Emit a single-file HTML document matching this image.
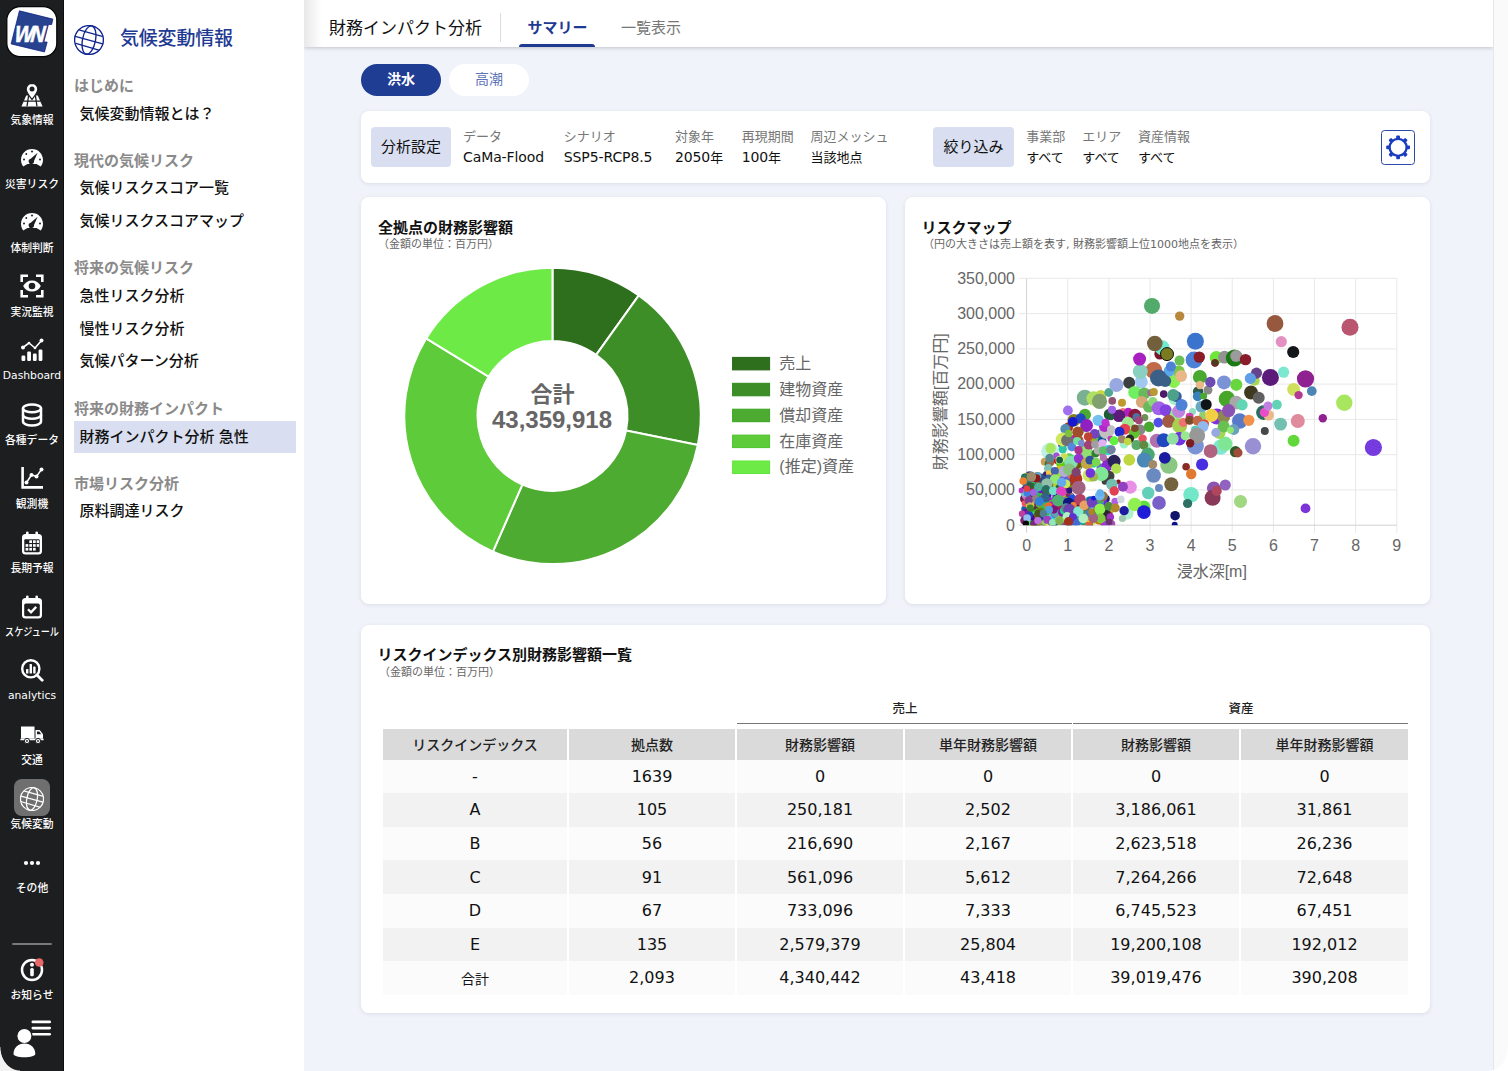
<!DOCTYPE html>
<html lang="ja">
<head>
<meta charset="utf-8">
<title>財務インパクト分析</title>
<style>
*{box-sizing:border-box;margin:0;padding:0}
html,body{width:1508px;height:1071px;overflow:hidden;background:#f0f3f9}
body{font-family:"Liberation Sans","Noto Sans CJK JP",sans-serif;color:#111;position:relative}
.abs{position:absolute}
#rail{position:absolute;left:0;top:0;width:64px;height:1071px;background:#1d1e20;border-right:1.500px solid #0d0d0e;z-index:3}
.ri{position:absolute;left:20px;width:24px;height:24px}
.ri svg{display:block;width:24px;height:24px}
.rl{position:absolute;left:-18px;width:100px;text-align:center;color:#fff;line-height:14px;height:14px;white-space:nowrap;font-weight:500}
#side{position:absolute;left:64px;top:0;width:240px;height:1071px;background:#fff;z-index:2}
.sh{position:absolute;left:10px;font-size:15px;line-height:20px;color:#8a8a8a;font-weight:700;white-space:nowrap}
.si{position:absolute;left:10px;width:222px;height:32px;padding-left:5.500px;font-size:15px;line-height:31px;color:#111;font-weight:500;white-space:nowrap}
.si.sel{background:#d9dff0}
#top{position:absolute;left:304px;top:0;width:1189px;height:47.400px;background:#fff;box-shadow:0 1px 4px rgba(0,0,0,.2);z-index:1}
#scroll{position:absolute;left:1493px;top:0;width:15px;height:1071px;background:#fafafa;border-left:1px solid #e6e6e6;z-index:2}
.pill{width:80px;height:32px;border-radius:16px;font-size:14px;line-height:31px;text-align:center}
.card{position:absolute;background:#fff;border-radius:8px;box-shadow:0 1px 4px rgba(30,40,80,.10)}
.ct{position:absolute;font-size:15px;line-height:20px;font-weight:700;color:#111;white-space:nowrap}
.cs{position:absolute;font-size:11px;line-height:14px;color:#666;white-space:nowrap;font-weight:400;font-family:"DejaVu Sans","Noto Sans CJK JP",sans-serif}
.chip{position:absolute;height:40px;border-radius:4px;background:#d9dff0;font-size:15px;line-height:39px;text-align:center;font-weight:400;color:#111}
.k{position:absolute;top:18.500px;font-size:13px;line-height:16px;color:#777;white-space:nowrap}
.v{position:absolute;top:37.500px;font-size:14px;line-height:18px;color:#111;white-space:nowrap;font-family:"DejaVu Sans","Noto Sans CJK JP",sans-serif;letter-spacing:-.1px}
.v .j{font-size:13px;letter-spacing:0}
.gh{position:absolute;top:75.500px;font-size:12.500px;line-height:16px;text-align:center;color:#222;font-weight:500}
.tb{position:absolute;left:22px;top:103.800px;border-collapse:separate;border-spacing:0;table-layout:fixed;width:1025px}
.tb th,.tb td{text-align:center;border-right:2px solid #fff;white-space:nowrap;padding:0}
.tb th{height:30.800px;background:#dadada;font-size:14px;font-weight:500;color:#222;border-bottom:0}
.tb td{height:33.600px;font-size:16px;color:#111;font-family:"DejaVu Sans","Noto Sans CJK JP",sans-serif}
.tb td .j{font-size:14px}
.tb th:last-child,.tb td:last-child{border-right:0}
.tb tr.a td{background:#fbfbfc}
.tb tr.b td{background:#f2f2f2}
.cbl{position:absolute;left:0;bottom:0;width:20px;height:24px;z-index:9;background:radial-gradient(ellipse 20px 24px at 100% 0,rgba(255,255,255,0) 96%,#f2f2f2 100%)}
.cbr{position:absolute;right:0;bottom:0;width:18px;height:24px;z-index:9;background:radial-gradient(ellipse 18px 24px at 0 0,rgba(255,255,255,0) 96%,#fff 100%)}

</style>
</head>
<body>
<div id="rail">
<div id="corner"></div>
<svg class="abs" style="left:6px;top:6px" width="52" height="52" viewBox="-1 -1 52 52"><rect x="-.2" y="-.3" width="50" height="50" rx="13.500" fill="#fff" stroke="#060607" stroke-width="1.300"/><path d="M12.400 3.800L45.900 12.100l-1.200 5.400h-3.300L36.900 34.900l3.300.2-2.700 9.900L4.100 36.900z" fill="#27438f" stroke="#0a1585" stroke-width=".7" stroke-linejoin="miter"/><text transform="translate(5.800 34.800) skewX(-15) scale(.86 1)" font-family="Liberation Sans, sans-serif" font-weight="700" font-size="23.400" fill="#fff" stroke="#fff" stroke-width=".5" letter-spacing="-3.200">WN</text></svg>
<div class="abs" style="left:14px;top:779px;width:36px;height:37px;border-radius:8px;background:#6f6f6f"></div>
<div class="ri" style="top:82.5px"><svg viewBox="0 0 24 24"><path d="M6.2 12.6h11.6L22.6 23.4H1.4z" fill="#fff"/><g stroke="#1d1e20" stroke-width="1.3" fill="none"><path d="M3.2 18.2h17.6M8.6 12.6L7 23.4M15.4 12.6L17 23.4"/></g><path d="M12 0.3c-3.2 0-5.8 2.5-5.8 5.7 0 3.9 4.4 8.300 5.8 10.5 1.4-2.2 5.8-6.600 5.8-10.5 0-3.200-2.600-5.700-5.800-5.700z" fill="#fff" stroke="#1d1e20" stroke-width="1.2"/><circle cx="12" cy="6" r="2.5" fill="#1d1e20"/></svg></div>
<div class="rl" style="top:112.5px;font-size:10.8px">気象情報</div>
<div class="ri" style="top:146.1px"><svg viewBox="0 0 24 24"><path d="M3.2 20.4C1.9 18.600 1 16.300 1 14 1 7.900 5.900 3 12 3s11 4.900 11 11c0 2.300-.9 4.600-2.200 6.400l-4.300-2.400H7.500z" fill="#fff"/><path d="M17.600 6.800l-3.600 8.300a2.700 2.700 0 1 1-3.300-2.300z" fill="#1d1e20"/><circle cx="12" cy="5.600" r="1" fill="#1d1e20"/><circle cx="4" cy="13.600" r="1" fill="#1d1e20"/><circle cx="20" cy="13.600" r="1" fill="#1d1e20"/><circle cx="6.300" cy="8" r=".9" fill="#1d1e20"/></svg></div>
<div class="rl" style="top:177.0px;font-size:10.8px">災害リスク</div>
<div class="ri" style="top:210.1px"><svg viewBox="0 0 24 24"><path d="M3.2 20.4C1.9 18.600 1 16.300 1 14 1 7.900 5.900 3 12 3s11 4.900 11 11c0 2.300-.9 4.600-2.200 6.400l-4.300-2.400H7.500z" fill="#fff"/><path d="M17.600 6.800l-3.600 8.300a2.700 2.700 0 1 1-3.300-2.300z" fill="#1d1e20"/><circle cx="12" cy="5.600" r="1" fill="#1d1e20"/><circle cx="4" cy="13.600" r="1" fill="#1d1e20"/><circle cx="20" cy="13.600" r="1" fill="#1d1e20"/><circle cx="6.300" cy="8" r=".9" fill="#1d1e20"/></svg></div>
<div class="rl" style="top:241.0px;font-size:10.8px">体制判断</div>
<div class="ri" style="top:274.0px"><svg viewBox="0 0 24 24"><g fill="none" stroke="#fff" stroke-width="2.600"><path d="M1.700 8V1.700H8M16 1.700h6.300V8M22.300 16v6.300H16M8 22.300H1.700V16"/></g><path d="M3.200 12C5 8.300 8.200 6.400 12 6.400s7 1.900 8.800 5.600C19 15.700 15.800 17.600 12 17.600S5 15.700 3.200 12z" fill="#fff"/><circle cx="12" cy="12" r="3.300" fill="#1d1e20"/><circle cx="12" cy="12" r="1.300" fill="#fff" opacity=".0"/></svg></div>
<div class="rl" style="top:305.0px;font-size:10.8px">実況監視</div>
<div class="ri" style="top:338.0px"><svg viewBox="0 0 24 24"><g fill="#fff"><rect x="1.500" y="17.500" width="3.800" height="5.500" rx="1.200"/><rect x="7.200" y="13.500" width="3.800" height="9.500" rx="1.200"/><rect x="12.900" y="15.500" width="3.800" height="7.500" rx="1.200"/><rect x="18.600" y="11.500" width="3.800" height="11.500" rx="1.200"/></g><path d="M3 9.500L9 5l6 5 6.500-7.500" fill="none" stroke="#fff" stroke-width="1.600" stroke-linejoin="round"/><circle cx="3" cy="9.500" r="2" fill="#fff"/><circle cx="21.500" cy="2.600" r="2" fill="#fff"/><circle cx="9" cy="5" r="1.300" fill="#fff"/><circle cx="15" cy="10" r="1.300" fill="#fff"/></svg></div>
<div class="rl" style="top:369.0px;font-size:10.75px;font-family:DejaVu Sans,sans-serif;font-weight:400">Dashboard</div>
<div class="ri" style="top:402.8px"><svg viewBox="0 0 24 24"><g fill="none" stroke="#fff" stroke-width="2.500"><ellipse cx="12" cy="5.400" rx="9" ry="3.800"/><path d="M3 5.400v13.200c0 2.100 4 3.800 9 3.800s9-1.700 9-3.800V5.400"/><path d="M3 12c0 2.100 4 3.800 9 3.800s9-1.700 9-3.800"/></g></svg></div>
<div class="rl" style="top:433.0px;font-size:10.8px">各種データ</div>
<div class="ri" style="top:466.0px"><svg viewBox="0 0 24 24"><path d="M2.600 1v20.400H23" fill="none" stroke="#fff" stroke-width="2.600" stroke-linejoin="miter"/><path d="M6.500 16.500l5-7.500 5 1.500 5-7" fill="none" stroke="#fff" stroke-width="1.500"/><circle cx="6.500" cy="16.500" r="2" fill="#fff"/><circle cx="11.500" cy="9" r="2" fill="#fff"/><circle cx="16.500" cy="10.500" r="2" fill="#fff"/><circle cx="21.500" cy="3.500" r="2" fill="#fff"/></svg></div>
<div class="rl" style="top:497.0px;font-size:10.8px">観測機</div>
<div class="ri" style="top:530.5px"><svg viewBox="0 0 24 24"><rect x="6" y="0.500" width="2.600" height="5" rx="1.300" fill="#fff"/><rect x="15.400" y="0.500" width="2.600" height="5" rx="1.300" fill="#fff"/><rect x="2" y="3" width="20" height="20.500" rx="3.500" fill="#fff"/><rect x="4.300" y="8.300" width="15.400" height="12.900" rx="1" fill="#1d1e20"/><g fill="#fff"><rect x="9.300" y="9.300" width="2.700" height="2.700"/><rect x="13" y="9.300" width="2.700" height="2.700"/><rect x="16.700" y="9.300" width="2.400" height="2.700"/><rect x="5.600" y="13.100" width="2.700" height="2.700"/><rect x="9.300" y="13.100" width="2.700" height="2.700"/><rect x="13" y="13.100" width="2.700" height="2.700"/><rect x="16.700" y="13.100" width="2.400" height="2.700"/><rect x="5.600" y="16.900" width="2.700" height="2.700"/><rect x="9.300" y="16.900" width="2.700" height="2.700"/><rect x="13" y="16.900" width="2.700" height="2.700"/></g></svg></div>
<div class="rl" style="top:561.0px;font-size:10.8px">長期予報</div>
<div class="ri" style="top:594.6px"><svg viewBox="0 0 24 24"><rect x="6" y="0.500" width="2.600" height="5" rx="1.300" fill="#fff"/><rect x="15.400" y="0.500" width="2.600" height="5" rx="1.300" fill="#fff"/><rect x="2" y="3" width="20" height="20.500" rx="3.500" fill="#fff"/><rect x="4.200" y="8.600" width="15.600" height="12.700" rx="1.600" fill="#1d1e20"/><path d="M8 14.300l3 3 5.200-5.400" fill="none" stroke="#fff" stroke-width="2.300"/></svg></div>
<div class="rl" style="top:625.0px;font-size:10.8px;transform:scaleX(.84)">スケジュール</div>
<div class="ri" style="top:658.0px"><svg viewBox="0 0 24 24"><circle cx="10.800" cy="10.800" r="8.600" fill="none" stroke="#fff" stroke-width="2.400"/><path d="M17.200 17.200l5 5" stroke="#fff" stroke-width="2.800" stroke-linecap="round"/><g fill="#fff"><rect x="6" y="11" width="2.400" height="4.500" rx=".6"/><rect x="9.600" y="6" width="2.400" height="9.500" rx=".6"/><rect x="13.200" y="8.500" width="2.400" height="7" rx=".6"/></g></svg></div>
<div class="rl" style="top:689.0px;font-size:10.75px;font-family:DejaVu Sans,sans-serif;font-weight:400">analytics</div>
<div class="ri" style="top:722.0px"><svg viewBox="0 0 24 24"><path d="M1 4.500h13.500v12H1z" fill="#fff"/><path d="M15.500 8h4.200l3.300 4.300v4.200h-7.500z" fill="#fff"/><path d="M17 9.600h2.300l1.900 2.600H17z" fill="#1d1e20"/><rect x="0.300" y="16.500" width="23.400" height="1.800" rx=".9" fill="#fff"/><circle cx="7" cy="19" r="2.600" fill="#fff" stroke="#1d1e20" stroke-width="1"/><circle cx="7" cy="19" r=".9" fill="#1d1e20"/><circle cx="18" cy="19" r="2.600" fill="#fff" stroke="#1d1e20" stroke-width="1"/><circle cx="18" cy="19" r=".9" fill="#1d1e20"/></svg></div>
<div class="rl" style="top:753.0px;font-size:10.8px">交通</div>
<div class="ri" style="top:786.5px"><svg viewBox="0 0 30 30"><g fill="none" stroke="#fff" stroke-width="1.55" stroke-linecap="round"><circle cx="15" cy="15" r="14.400"/><ellipse cx="15" cy="15" rx="6.500" ry="14.300" transform="rotate(11 15 15)"/><path d="M5.800 5.100L28.200 11.400M1.200 11.400L28.700 18.900M1.900 18.400L24.700 25.200"/></g></svg></div>
<div class="rl" style="top:816.5px;font-size:10.8px">気候変動</div>
<div class="ri" style="top:851.0px"><svg viewBox="0 0 24 24"><circle cx="6" cy="12" r="2.100" fill="#fff"/><circle cx="12" cy="12" r="2.100" fill="#fff"/><circle cx="18" cy="12" r="2.100" fill="#fff"/></svg></div>
<div class="rl" style="top:880.5px;font-size:10.8px">その他</div>
<div class="ri" style="top:957.5px"><svg viewBox="0 0 24 24"><circle cx="12" cy="12" r="10" fill="none" stroke="#fff" stroke-width="2.500"/><rect x="10.200" y="10" width="3.600" height="8.300" rx="1.500" fill="#fff"/><circle cx="12" cy="6.800" r="2" fill="#fff"/><circle cx="19.200" cy="4.500" r="4.300" fill="#e9686a"/></svg></div>
<div class="rl" style="top:987.5px;font-size:10.8px">お知らせ</div>
<div class="abs" style="left:12px;top:942.500px;width:40px;height:2.500px;background:#7a7a7a;border-radius:1px"></div>
<svg class="abs" style="left:8px;top:1016px" width="48" height="46" viewBox="0 0 48 46"><g fill="#fff"><rect x="23.500" y="4.600" width="19.500" height="2.600" rx="1.300"/><rect x="23.500" y="10.800" width="19.500" height="2.600" rx="1.300"/><rect x="23.500" y="16.900" width="19.500" height="2.600" rx="1.300"/><circle cx="16.400" cy="20" r="7.600" stroke="#1d1e20" stroke-width="1.200"/><path d="M5.500 38c0-6 4.500-10.500 10.900-10.500S27.300 32 27.300 38c0 1.800-4.500 3.200-10.900 3.200S5.500 39.800 5.500 38z"/></g></svg>
</div>
<div id="side">
<div class="abs" style="left:10px;top:24.500px;width:30px;height:30px"><svg width="30" height="30" viewBox="0 0 30 30"><g fill="none" stroke="#0f2590" stroke-width="1.35" stroke-linecap="round"><circle cx="15" cy="15" r="14.400"/><ellipse cx="15" cy="15" rx="6.500" ry="14.300" transform="rotate(11 15 15)"/><path d="M5.800 5.100L28.200 11.400M1.200 11.400L28.700 18.900M1.900 18.400L24.700 25.200"/></g></svg></div>
<div class="abs" style="left:56px;top:24px;font-size:19px;line-height:30px;color:#1f3a93;font-weight:500;white-space:nowrap;letter-spacing:-.2px">気候変動情報</div>
<div class="sh" style="top:76.0px">はじめに</div>
<div class="sh" style="top:151.0px">現代の気候リスク</div>
<div class="sh" style="top:258.2px">将来の気候リスク</div>
<div class="sh" style="top:399.0px">将来の財務インパクト</div>
<div class="sh" style="top:473.5px">市場リスク分析</div>
<div class="si" style="top:97.7px">気候変動情報とは？</div>
<div class="si" style="top:172.4px">気候リスクスコア一覧</div>
<div class="si" style="top:204.5px">気候リスクスコアマップ</div>
<div class="si" style="top:280.0px">急性リスク分析</div>
<div class="si" style="top:312.6px">慢性リスク分析</div>
<div class="si" style="top:345.0px">気候パターン分析</div>
<div class="si sel" style="top:420.8px">財務インパクト分析 急性</div>
<div class="si" style="top:495.0px">原料調達リスク</div>
</div>
<div id="top">
<div class="abs" style="left:0;top:0;width:18px;height:47px;background:linear-gradient(90deg,rgba(0,0,0,.09),rgba(0,0,0,0))"></div><div class="abs" style="left:25px;top:14.800px;font-size:17px;line-height:28px;font-weight:400;color:#111;white-space:nowrap">財務インパクト分析</div>
<div class="abs" style="left:196px;top:13px;width:1px;height:29px;background:#dcdcdc"></div>
<div class="abs" style="left:223.500px;top:14px;font-size:15px;line-height:28px;font-weight:700;color:#1f3a93;white-space:nowrap">サマリー</div>
<div class="abs" style="left:215px;top:43.600px;width:76px;height:3.400px;background:#1f3a93;border-radius:3px 3px 0 0"></div>
<div class="abs" style="left:317px;top:14px;font-size:15px;line-height:28px;font-weight:400;color:#777;white-space:nowrap">一覧表示</div>
</div>
<div id="scroll"></div>
<div class="abs pill" style="left:361px;top:63.500px;background:#1f3d93;color:#fff;font-weight:700">洪水</div>
<div class="abs pill" style="left:449px;top:63.500px;background:#fff;color:#5d76b9;font-weight:400">高潮</div>
<div class="card" style="left:361px;top:110.500px;width:1069px;height:72px">
<div class="chip" style="left:9.700px;top:16px;width:80.500px">分析設定</div>
<div class="k" style="left:102.0px">データ</div><div class="v" style="left:102.0px">CaMa-Flood</div>
<div class="k" style="left:202.8px">シナリオ</div><div class="v" style="left:202.8px">SSP5-RCP8.5</div>
<div class="k" style="left:313.9px">対象年</div><div class="v" style="left:313.9px">2050<span class="j">年</span></div>
<div class="k" style="left:380.7px">再現期間</div><div class="v" style="left:380.7px">100<span class="j">年</span></div>
<div class="k" style="left:449.5px">周辺メッシュ</div><div class="v" style="left:449.5px"><span class="j">当該地点</span></div>
<div class="chip" style="left:572.300px;top:16px;width:80.500px">絞り込み</div>
<div class="k" style="left:665.2px">事業部</div><div class="v" style="left:665.2px"><span class="j">すべて</span></div>
<div class="k" style="left:721.3px">エリア</div><div class="v" style="left:721.3px"><span class="j">すべて</span></div>
<div class="k" style="left:776.9px">資産情報</div><div class="v" style="left:776.9px"><span class="j">すべて</span></div>
<div class="abs" style="left:1020px;top:19.800px;width:34.200px;height:34.600px;border:1px solid #2c4aa8;border-radius:3.500px;background:#fff"><svg style="position:absolute;left:0;top:0" width="32" height="32" viewBox="-16.100 -16.400 32 32"><g fill="#1a3cc0"><rect x="-1.900" y="-11.900" width="3.800" height="4" rx="1.100" transform="rotate(0)"/><rect x="-1.900" y="-11.900" width="3.800" height="4" rx="1.100" transform="rotate(45)"/><rect x="-1.900" y="-11.900" width="3.800" height="4" rx="1.100" transform="rotate(90)"/><rect x="-1.900" y="-11.900" width="3.800" height="4" rx="1.100" transform="rotate(135)"/><rect x="-1.900" y="-11.900" width="3.800" height="4" rx="1.100" transform="rotate(180)"/><rect x="-1.900" y="-11.900" width="3.800" height="4" rx="1.100" transform="rotate(225)"/><rect x="-1.900" y="-11.900" width="3.800" height="4" rx="1.100" transform="rotate(270)"/><rect x="-1.900" y="-11.900" width="3.800" height="4" rx="1.100" transform="rotate(315)"/></g><circle r="8.500" fill="none" stroke="#1a3cc0" stroke-width="2.300"/></svg></div>
</div>
<div class="card" style="left:361px;top:197px;width:525px;height:407px">
<div class="ct" style="left:17px;top:20.500px">全拠点の財務影響額</div>
<div class="cs" style="left:17px;top:41px">（金額の単位：百万円）</div>
<svg class="abs" style="left:0;top:0" width="525" height="407" viewBox="0 0 525 407"><path d="M191.50 70.70A148.2 148.2 0 0 1 277.77 98.40L235.16 157.92A75 75 0 0 0 191.50 143.90Z" fill="#2e6f1e" stroke="#fff" stroke-width="2" stroke-linejoin="round"/><path d="M277.77 98.40A148.2 148.2 0 0 1 336.83 247.94L265.05 233.60A75 75 0 0 0 235.16 157.92Z" fill="#3e8e28" stroke="#fff" stroke-width="2" stroke-linejoin="round"/><path d="M336.83 247.94A148.2 148.2 0 0 1 131.93 354.60L161.35 287.57A75 75 0 0 0 265.05 233.60Z" fill="#4eab31" stroke="#fff" stroke-width="2" stroke-linejoin="round"/><path d="M131.93 354.60A148.2 148.2 0 0 1 65.14 141.47L127.55 179.71A75 75 0 0 0 161.35 287.57Z" fill="#5ecb3a" stroke="#fff" stroke-width="2" stroke-linejoin="round"/><path d="M65.14 141.47A148.2 148.2 0 0 1 191.50 70.70L191.50 143.90A75 75 0 0 0 127.55 179.71Z" fill="#6eea47" stroke="#fff" stroke-width="2" stroke-linejoin="round"/><text x="191.5" y="204.5" text-anchor="middle" font-size="22" fill="#666" font-weight="700" font-family="Liberation Sans, Noto Sans CJK JP, sans-serif">合計</text><text x="191.0" y="231.0" text-anchor="middle" font-size="24" fill="#666" font-weight="700" font-family="Liberation Sans, sans-serif">43,359,918</text><rect x="371.6" y="160.4" width="37" height="12.500" fill="#2e6f1e" stroke="#276818" stroke-width="1"/><text x="418.3" y="171.8" font-size="16" fill="#666" font-family="Liberation Sans, Noto Sans CJK JP, sans-serif">売上</text><rect x="371.6" y="186.3" width="37" height="12.500" fill="#3e8e28" stroke="#2f8a1c" stroke-width="1"/><text x="418.3" y="197.7" font-size="16" fill="#666" font-family="Liberation Sans, Noto Sans CJK JP, sans-serif">建物資産</text><rect x="371.6" y="212.2" width="37" height="12.500" fill="#4eab31" stroke="#3aa522" stroke-width="1"/><text x="418.3" y="223.6" font-size="16" fill="#666" font-family="Liberation Sans, Noto Sans CJK JP, sans-serif">償却資産</text><rect x="371.6" y="238.1" width="37" height="12.500" fill="#5ecb3a" stroke="#4cc42c" stroke-width="1"/><text x="418.3" y="249.5" font-size="16" fill="#666" font-family="Liberation Sans, Noto Sans CJK JP, sans-serif">在庫資産</text><rect x="371.6" y="264.0" width="37" height="12.500" fill="#6eea47" stroke="#5fe53a" stroke-width="1"/><text x="418.3" y="275.4" font-size="16" fill="#666" font-family="Liberation Sans, Noto Sans CJK JP, sans-serif">(推定)資産</text></svg>
</div>
<div class="card" style="left:905px;top:197px;width:525px;height:407px">
<div class="ct" style="left:16.500px;top:20.500px">リスクマップ</div>
<div class="cs" style="left:18px;top:41px">（円の大きさは売上額を表す, 財務影響額上位1000地点を表示）</div>
<svg class="abs" style="left:0;top:0" width="525" height="407" viewBox="905 197 525 407" font-family="Liberation Sans, Noto Sans CJK JP, sans-serif"><defs><pattern id="dp" width="2.600" height="2.600" patternUnits="userSpaceOnUse" patternTransform="rotate(18)"><circle cx=".7" cy=".7" r=".42" fill="#fff" fill-opacity=".26"/><circle cx="2" cy="2" r=".4" fill="#000" fill-opacity=".07"/></pattern><clipPath id="cl"><rect x="1018.500" y="270" width="400" height="255.2"/></clipPath></defs><path d="M1026.6 278.3V532.7" stroke="#d2d2d2" stroke-width="1"/><path d="M1067.7 278.3V532.7" stroke="#e8e8e8" stroke-width="1"/><path d="M1108.9 278.3V532.7" stroke="#e8e8e8" stroke-width="1"/><path d="M1150.0 278.3V532.7" stroke="#e8e8e8" stroke-width="1"/><path d="M1191.1 278.3V532.7" stroke="#e8e8e8" stroke-width="1"/><path d="M1232.2 278.3V532.7" stroke="#e8e8e8" stroke-width="1"/><path d="M1273.4 278.3V532.7" stroke="#e8e8e8" stroke-width="1"/><path d="M1314.5 278.3V532.7" stroke="#e8e8e8" stroke-width="1"/><path d="M1355.6 278.3V532.7" stroke="#e8e8e8" stroke-width="1"/><path d="M1396.8 278.3V532.7" stroke="#e8e8e8" stroke-width="1"/><path d="M1018.6 525.2H1396.8" stroke="#d2d2d2" stroke-width="1"/><path d="M1018.6 489.9H1396.8" stroke="#e8e8e8" stroke-width="1"/><path d="M1018.6 454.7H1396.8" stroke="#e8e8e8" stroke-width="1"/><path d="M1018.6 419.4H1396.8" stroke="#e8e8e8" stroke-width="1"/><path d="M1018.6 384.1H1396.8" stroke="#e8e8e8" stroke-width="1"/><path d="M1018.6 348.9H1396.8" stroke="#e8e8e8" stroke-width="1"/><path d="M1018.6 313.6H1396.8" stroke="#e8e8e8" stroke-width="1"/><path d="M1018.6 278.3H1396.8" stroke="#e8e8e8" stroke-width="1"/><text x="1015" y="530.5" text-anchor="end" font-size="16" fill="#666">0</text><text x="1015" y="495.2" text-anchor="end" font-size="16" fill="#666">50,000</text><text x="1015" y="460.0" text-anchor="end" font-size="16" fill="#666">100,000</text><text x="1015" y="424.7" text-anchor="end" font-size="16" fill="#666">150,000</text><text x="1015" y="389.4" text-anchor="end" font-size="16" fill="#666">200,000</text><text x="1015" y="354.2" text-anchor="end" font-size="16" fill="#666">250,000</text><text x="1015" y="318.9" text-anchor="end" font-size="16" fill="#666">300,000</text><text x="1015" y="283.6" text-anchor="end" font-size="16" fill="#666">350,000</text><text x="1026.6" y="551" text-anchor="middle" font-size="16" fill="#666">0</text><text x="1067.7" y="551" text-anchor="middle" font-size="16" fill="#666">1</text><text x="1108.9" y="551" text-anchor="middle" font-size="16" fill="#666">2</text><text x="1150.0" y="551" text-anchor="middle" font-size="16" fill="#666">3</text><text x="1191.1" y="551" text-anchor="middle" font-size="16" fill="#666">4</text><text x="1232.2" y="551" text-anchor="middle" font-size="16" fill="#666">5</text><text x="1273.4" y="551" text-anchor="middle" font-size="16" fill="#666">6</text><text x="1314.5" y="551" text-anchor="middle" font-size="16" fill="#666">7</text><text x="1355.6" y="551" text-anchor="middle" font-size="16" fill="#666">8</text><text x="1396.8" y="551" text-anchor="middle" font-size="16" fill="#666">9</text><text x="1211.800" y="577" text-anchor="middle" font-size="16" fill="#666">浸水深[m]</text><text transform="translate(945.600 401.800) rotate(-90)" text-anchor="middle" font-size="16" fill="#666">財務影響額[百万円]</text><g clip-path="url(#cl)"><circle cx="1068.9" cy="489.0" r="3.3" fill="#358b91"/><circle cx="1037.4" cy="481.8" r="3.0" fill="#61318a"/><circle cx="1065.8" cy="514.5" r="3.5" fill="#77ac51"/><circle cx="1047.9" cy="521.2" r="3.2" fill="#549b20"/><circle cx="1047.9" cy="521.2" r="2.6" fill="url(#dp)"/><circle cx="1034.4" cy="481.0" r="3.2" fill="#0c7890"/><circle cx="1034.4" cy="481.0" r="2.6" fill="url(#dp)"/><circle cx="1041.0" cy="497.5" r="3.3" fill="#bf7f65"/><circle cx="1041.0" cy="497.5" r="2.7" fill="url(#dp)"/><circle cx="1025.8" cy="518.2" r="3.3" fill="#837935"/><circle cx="1060.0" cy="477.5" r="3.8" fill="#c1c710"/><circle cx="1025.9" cy="499.7" r="3.5" fill="#903460"/><circle cx="1028.7" cy="475.3" r="3.9" fill="#cf61c1"/><circle cx="1069.9" cy="484.2" r="3.1" fill="#7aa438"/><circle cx="1068.8" cy="497.8" r="4.4" fill="#7c2d80"/><circle cx="1068.8" cy="497.8" r="3.8" fill="url(#dp)"/><circle cx="1057.2" cy="460.1" r="4.1" fill="#bd181b"/><circle cx="1065.0" cy="512.0" r="3.0" fill="#183ec0"/><circle cx="1049.2" cy="502.8" r="2.8" fill="#762938"/><circle cx="1049.2" cy="502.8" r="2.2" fill="url(#dp)"/><circle cx="1067.8" cy="493.6" r="3.0" fill="#0e6995"/><circle cx="1068.1" cy="427.5" r="4.9" fill="#a8340d"/><circle cx="1068.1" cy="427.5" r="4.3" fill="url(#dp)"/><circle cx="1062.0" cy="510.6" r="3.2" fill="#509ddb"/><circle cx="1041.2" cy="524.6" r="4.6" fill="#7f3556"/><circle cx="1044.5" cy="522.6" r="3.3" fill="#257f13"/><circle cx="1105.4" cy="514.5" r="3.6" fill="#69c967"/><circle cx="1067.5" cy="521.6" r="4.5" fill="#634cee"/><circle cx="1067.5" cy="521.6" r="3.9" fill="url(#dp)"/><circle cx="1028.8" cy="484.7" r="2.9" fill="#798d2a"/><circle cx="1071.0" cy="462.7" r="3.8" fill="#692547"/><circle cx="1071.0" cy="462.7" r="3.2" fill="url(#dp)"/><circle cx="1051.8" cy="521.6" r="3.5" fill="#8e2178"/><circle cx="1096.0" cy="517.9" r="5.1" fill="#192c6c"/><circle cx="1081.1" cy="516.3" r="4.1" fill="#69351a"/><circle cx="1074.9" cy="475.2" r="5.0" fill="#74353d"/><circle cx="1026.1" cy="504.2" r="2.9" fill="#dca213"/><circle cx="1066.2" cy="458.9" r="4.3" fill="#51731c"/><circle cx="1066.2" cy="458.9" r="3.7" fill="url(#dp)"/><circle cx="1045.9" cy="519.5" r="3.2" fill="#b2c544"/><circle cx="1108.8" cy="516.4" r="4.0" fill="#7f17ca"/><circle cx="1041.3" cy="484.8" r="3.5" fill="#496c9a"/><circle cx="1068.1" cy="508.0" r="3.3" fill="#bd9f3e"/><circle cx="1036.1" cy="510.2" r="4.5" fill="#4df6c1"/><circle cx="1025.6" cy="502.5" r="3.5" fill="#93b860"/><circle cx="1025.6" cy="502.5" r="2.9" fill="url(#dp)"/><circle cx="1030.9" cy="519.4" r="3.8" fill="#70d86c"/><circle cx="1087.6" cy="504.8" r="4.4" fill="#3d8cb1"/><circle cx="1087.6" cy="504.8" r="3.8" fill="url(#dp)"/><circle cx="1046.0" cy="499.4" r="3.0" fill="#cd74ad"/><circle cx="1110.7" cy="524.0" r="4.6" fill="#a552b2"/><circle cx="1023.8" cy="520.3" r="3.6" fill="#cb59d4"/><circle cx="1055.9" cy="478.1" r="3.6" fill="#5e5f26"/><circle cx="1075.7" cy="506.3" r="4.9" fill="#0881b7"/><circle cx="1045.2" cy="477.7" r="3.5" fill="#4b98f6"/><circle cx="1033.7" cy="509.8" r="3.5" fill="#a77ac9"/><circle cx="1033.7" cy="509.8" r="2.9" fill="url(#dp)"/><circle cx="1048.9" cy="477.9" r="3.6" fill="#aeb667"/><circle cx="1048.9" cy="477.9" r="3.0" fill="url(#dp)"/><circle cx="1085.1" cy="427.5" r="4.9" fill="#62e3a3"/><circle cx="1052.0" cy="477.0" r="3.5" fill="#ee3a89"/><circle cx="1063.1" cy="499.5" r="3.3" fill="#64a5c0"/><circle cx="1063.1" cy="499.5" r="2.7" fill="url(#dp)"/><circle cx="1067.2" cy="501.1" r="3.5" fill="#a13781"/><circle cx="1033.8" cy="509.0" r="3.6" fill="#542e70"/><circle cx="1033.8" cy="509.0" r="3.0" fill="url(#dp)"/><circle cx="1047.4" cy="522.9" r="4.4" fill="#edeb4a"/><circle cx="1047.4" cy="522.9" r="3.8" fill="url(#dp)"/><circle cx="1065.8" cy="506.2" r="3.5" fill="#3bd1a7"/><circle cx="1065.8" cy="506.2" r="2.9" fill="url(#dp)"/><circle cx="1040.5" cy="508.0" r="3.6" fill="#9a1245"/><circle cx="1062.2" cy="512.9" r="3.7" fill="#116176"/><circle cx="1055.2" cy="514.4" r="3.5" fill="#047d76"/><circle cx="1071.6" cy="487.6" r="2.9" fill="#95d260"/><circle cx="1062.3" cy="444.9" r="4.2" fill="#4e309d"/><circle cx="1043.7" cy="518.5" r="4.6" fill="#4fbf63"/><circle cx="1043.7" cy="518.5" r="4.0" fill="url(#dp)"/><circle cx="1028.9" cy="480.4" r="3.5" fill="#3db857"/><circle cx="1028.9" cy="480.4" r="2.9" fill="url(#dp)"/><circle cx="1026.6" cy="505.7" r="3.5" fill="#a87a06"/><circle cx="1041.3" cy="504.6" r="3.6" fill="#635dbf"/><circle cx="1041.3" cy="504.6" r="3.0" fill="url(#dp)"/><circle cx="1097.0" cy="441.8" r="4.8" fill="#5eb85c"/><circle cx="1097.0" cy="441.8" r="4.2" fill="url(#dp)"/><circle cx="1109.1" cy="511.3" r="4.4" fill="#b8b138"/><circle cx="1109.1" cy="511.3" r="3.8" fill="url(#dp)"/><circle cx="1075.6" cy="517.1" r="4.3" fill="#e14aaf"/><circle cx="1062.3" cy="502.6" r="4.1" fill="#1eaa8f"/><circle cx="1062.3" cy="502.6" r="3.5" fill="url(#dp)"/><circle cx="1073.9" cy="461.9" r="4.6" fill="#2d6bc3"/><circle cx="1058.5" cy="479.7" r="4.3" fill="#3bef3d"/><circle cx="1075.6" cy="521.9" r="3.7" fill="#539fcd"/><circle cx="1038.6" cy="479.6" r="3.9" fill="#7f3372"/><circle cx="1038.6" cy="479.6" r="3.3" fill="url(#dp)"/><circle cx="1054.0" cy="483.9" r="3.2" fill="#d1581a"/><circle cx="1054.0" cy="483.9" r="2.6" fill="url(#dp)"/><circle cx="1041.1" cy="514.5" r="2.9" fill="#829b11"/><circle cx="1041.1" cy="514.5" r="2.3" fill="url(#dp)"/><circle cx="1039.9" cy="480.3" r="3.3" fill="#aca535"/><circle cx="1063.6" cy="491.1" r="4.3" fill="#1e924f"/><circle cx="1100.3" cy="507.8" r="5.4" fill="#557e0d"/><circle cx="1100.3" cy="507.8" r="4.8" fill="url(#dp)"/><circle cx="1074.5" cy="512.1" r="5.3" fill="#948446"/><circle cx="1089.3" cy="500.9" r="4.4" fill="#3eaa7f"/><circle cx="1089.3" cy="500.9" r="3.8" fill="url(#dp)"/><circle cx="1066.2" cy="481.6" r="5.0" fill="#482694"/><circle cx="1070.8" cy="508.4" r="4.2" fill="#2b8d2a"/><circle cx="1065.8" cy="498.1" r="2.9" fill="#3fd16f"/><circle cx="1065.8" cy="498.1" r="2.3" fill="url(#dp)"/><circle cx="1061.5" cy="483.7" r="4.3" fill="#273054"/><circle cx="1101.7" cy="434.0" r="5.3" fill="#396880"/><circle cx="1056.7" cy="482.8" r="4.5" fill="#8b4e09"/><circle cx="1056.7" cy="482.8" r="3.9" fill="url(#dp)"/><circle cx="1058.9" cy="480.0" r="4.0" fill="#bff736"/><circle cx="1037.6" cy="501.0" r="3.1" fill="#37763c"/><circle cx="1037.6" cy="501.0" r="2.5" fill="url(#dp)"/><circle cx="1043.5" cy="481.9" r="4.0" fill="#4b5a23"/><circle cx="1043.5" cy="481.9" r="3.4" fill="url(#dp)"/><circle cx="1041.5" cy="501.2" r="3.1" fill="#81dd59"/><circle cx="1041.5" cy="501.2" r="2.5" fill="url(#dp)"/><circle cx="1081.3" cy="450.4" r="4.1" fill="#45a60f"/><circle cx="1027.8" cy="476.1" r="3.6" fill="#6e96d6"/><circle cx="1043.4" cy="490.6" r="3.4" fill="#b6375a"/><circle cx="1043.4" cy="490.6" r="2.8" fill="url(#dp)"/><circle cx="1037.1" cy="475.4" r="2.8" fill="#9644c7"/><circle cx="1037.1" cy="475.4" r="2.2" fill="url(#dp)"/><circle cx="1047.5" cy="495.4" r="3.7" fill="#2c17e0"/><circle cx="1074.7" cy="515.9" r="4.4" fill="#2fa46d"/><circle cx="1067.6" cy="516.1" r="3.9" fill="#47911e"/><circle cx="1034.1" cy="504.4" r="3.0" fill="#d8e823"/><circle cx="1034.1" cy="504.4" r="2.4" fill="url(#dp)"/><circle cx="1102.2" cy="440.9" r="4.3" fill="#075499"/><circle cx="1040.5" cy="503.3" r="3.0" fill="#f61c08"/><circle cx="1064.4" cy="465.2" r="5.2" fill="#628217"/><circle cx="1026.4" cy="489.9" r="4.0" fill="#2b169f"/><circle cx="1085.0" cy="507.9" r="3.9" fill="#527521"/><circle cx="1085.0" cy="507.9" r="3.3" fill="url(#dp)"/><circle cx="1054.2" cy="515.8" r="4.4" fill="#ad4f90"/><circle cx="1054.2" cy="515.8" r="3.8" fill="url(#dp)"/><circle cx="1041.7" cy="497.1" r="4.5" fill="#da7521"/><circle cx="1041.7" cy="497.1" r="3.9" fill="url(#dp)"/><circle cx="1044.4" cy="481.4" r="3.6" fill="#4ea7ad"/><circle cx="1044.4" cy="481.4" r="3.0" fill="url(#dp)"/><circle cx="1067.1" cy="467.4" r="4.3" fill="#1644a5"/><circle cx="1036.4" cy="507.8" r="4.5" fill="#547507"/><circle cx="1036.4" cy="507.8" r="3.9" fill="url(#dp)"/><circle cx="1069.9" cy="517.5" r="3.4" fill="#ef2be6"/><circle cx="1067.0" cy="499.6" r="4.4" fill="#70acca"/><circle cx="1067.0" cy="499.6" r="3.8" fill="url(#dp)"/><circle cx="1079.3" cy="513.7" r="4.2" fill="#1f92ab"/><circle cx="1079.3" cy="513.7" r="3.6" fill="url(#dp)"/><circle cx="1041.6" cy="492.9" r="3.1" fill="#93302e"/><circle cx="1039.5" cy="487.7" r="4.3" fill="#ef2f40"/><circle cx="1053.1" cy="509.8" r="4.5" fill="#0adb06"/><circle cx="1054.8" cy="507.2" r="3.6" fill="#4ded7f"/><circle cx="1054.0" cy="481.7" r="3.6" fill="#a31bde"/><circle cx="1054.0" cy="481.7" r="3.0" fill="url(#dp)"/><circle cx="1029.6" cy="478.6" r="4.0" fill="#06a5a0"/><circle cx="1029.6" cy="478.6" r="3.4" fill="url(#dp)"/><circle cx="1045.4" cy="502.6" r="3.7" fill="#e6467e"/><circle cx="1066.1" cy="495.7" r="3.4" fill="#bb525b"/><circle cx="1065.3" cy="429.0" r="5.0" fill="#538db2"/><circle cx="1033.5" cy="495.6" r="2.9" fill="#1ee96e"/><circle cx="1073.6" cy="439.1" r="4.0" fill="#be23a7"/><circle cx="1030.4" cy="509.5" r="2.8" fill="#34225f"/><circle cx="1035.0" cy="512.7" r="4.5" fill="#945ecf"/><circle cx="1035.0" cy="512.7" r="3.9" fill="url(#dp)"/><circle cx="1067.0" cy="479.0" r="3.8" fill="#966abb"/><circle cx="1067.0" cy="479.0" r="3.2" fill="url(#dp)"/><circle cx="1037.7" cy="477.1" r="3.6" fill="#bcc470"/><circle cx="1038.8" cy="476.9" r="3.8" fill="#9d0699"/><circle cx="1050.2" cy="522.2" r="3.1" fill="#a1c120"/><circle cx="1063.1" cy="480.2" r="3.9" fill="#244587"/><circle cx="1063.1" cy="480.2" r="3.3" fill="url(#dp)"/><circle cx="1066.0" cy="505.8" r="4.1" fill="#6b7c37"/><circle cx="1066.0" cy="505.8" r="3.5" fill="url(#dp)"/><circle cx="1028.6" cy="503.9" r="3.2" fill="#53cc15"/><circle cx="1059.1" cy="514.3" r="3.7" fill="#a44d22"/><circle cx="1060.5" cy="514.4" r="3.6" fill="#6e751a"/><circle cx="1060.5" cy="514.4" r="3.0" fill="url(#dp)"/><circle cx="1091.4" cy="521.3" r="4.7" fill="#cfea53"/><circle cx="1071.2" cy="515.2" r="4.1" fill="#43b98b"/><circle cx="1071.2" cy="515.2" r="3.5" fill="url(#dp)"/><circle cx="1028.9" cy="480.4" r="3.7" fill="#235484"/><circle cx="1026.4" cy="510.7" r="4.0" fill="#a60e14"/><circle cx="1026.4" cy="510.7" r="3.4" fill="url(#dp)"/><circle cx="1044.5" cy="500.8" r="4.3" fill="#32d46c"/><circle cx="1070.6" cy="496.0" r="3.5" fill="#8c1038"/><circle cx="1070.6" cy="496.0" r="2.9" fill="url(#dp)"/><circle cx="1065.3" cy="477.3" r="4.3" fill="#2ad7b6"/><circle cx="1028.7" cy="476.1" r="3.1" fill="#88af52"/><circle cx="1028.7" cy="476.1" r="2.5" fill="url(#dp)"/><circle cx="1069.8" cy="495.6" r="3.3" fill="#5bdba6"/><circle cx="1069.8" cy="495.6" r="2.7" fill="url(#dp)"/><circle cx="1077.6" cy="465.6" r="5.0" fill="#7b601a"/><circle cx="1035.7" cy="480.6" r="3.3" fill="#7a50c0"/><circle cx="1066.7" cy="480.2" r="4.4" fill="#8a0649"/><circle cx="1066.7" cy="480.2" r="3.8" fill="url(#dp)"/><circle cx="1031.1" cy="505.7" r="3.4" fill="#295258"/><circle cx="1024.3" cy="499.0" r="4.3" fill="#8f2136"/><circle cx="1024.3" cy="499.0" r="3.7" fill="url(#dp)"/><circle cx="1025.4" cy="509.1" r="4.2" fill="#0b67ae"/><circle cx="1089.3" cy="524.7" r="3.5" fill="#1443a9"/><circle cx="1089.3" cy="524.7" r="2.9" fill="url(#dp)"/><circle cx="1078.2" cy="512.9" r="4.2" fill="#924f2a"/><circle cx="1065.3" cy="487.4" r="3.3" fill="#6ba92b"/><circle cx="1063.6" cy="522.0" r="3.5" fill="#10d477"/><circle cx="1063.6" cy="522.0" r="2.9" fill="url(#dp)"/><circle cx="1039.7" cy="480.0" r="3.4" fill="#f1a716"/><circle cx="1055.5" cy="498.4" r="3.6" fill="#bf351e"/><circle cx="1055.5" cy="498.4" r="3.0" fill="url(#dp)"/><circle cx="1066.9" cy="509.1" r="3.2" fill="#298578"/><circle cx="1066.9" cy="509.1" r="2.6" fill="url(#dp)"/><circle cx="1068.8" cy="489.0" r="3.6" fill="#314cb4"/><circle cx="1068.8" cy="489.0" r="3.0" fill="url(#dp)"/><circle cx="1027.6" cy="477.2" r="3.0" fill="#b4384d"/><circle cx="1027.6" cy="477.2" r="2.4" fill="url(#dp)"/><circle cx="1064.8" cy="489.8" r="3.5" fill="#4e801f"/><circle cx="1064.8" cy="489.8" r="2.9" fill="url(#dp)"/><circle cx="1031.3" cy="514.5" r="4.5" fill="#469da9"/><circle cx="1063.1" cy="507.7" r="4.2" fill="#627322"/><circle cx="1103.2" cy="508.6" r="3.7" fill="#db3d63"/><circle cx="1103.2" cy="508.6" r="3.1" fill="url(#dp)"/><circle cx="1034.7" cy="515.8" r="4.0" fill="#9a4045"/><circle cx="1064.3" cy="500.0" r="4.0" fill="#9e4db3"/><circle cx="1032.3" cy="504.9" r="4.0" fill="#15712b"/><circle cx="1032.3" cy="504.9" r="3.4" fill="url(#dp)"/><circle cx="1068.7" cy="488.2" r="3.9" fill="#251e86"/><circle cx="1068.7" cy="488.2" r="3.3" fill="url(#dp)"/><circle cx="1030.3" cy="477.1" r="4.3" fill="#388a9a"/><circle cx="1070.2" cy="500.3" r="4.0" fill="#3bf8cb"/><circle cx="1048.1" cy="478.8" r="3.6" fill="#92613e"/><circle cx="1030.9" cy="478.3" r="3.3" fill="#47eb3b"/><circle cx="1025.0" cy="496.7" r="4.3" fill="#452858"/><circle cx="1025.0" cy="496.7" r="3.7" fill="url(#dp)"/><circle cx="1044.7" cy="461.7" r="3.9" fill="#ce9d50"/><circle cx="1063.7" cy="498.3" r="5.4" fill="#8656b6"/><circle cx="1067.6" cy="506.4" r="3.9" fill="#1c49d7"/><circle cx="1070.3" cy="476.2" r="3.7" fill="#3b31b3"/><circle cx="1070.3" cy="476.2" r="3.1" fill="url(#dp)"/><circle cx="1049.1" cy="484.0" r="3.8" fill="#df7662"/><circle cx="1072.8" cy="459.4" r="4.4" fill="#45f596"/><circle cx="1024.0" cy="491.5" r="3.6" fill="#e34a70"/><circle cx="1031.7" cy="476.1" r="3.2" fill="#ccb624"/><circle cx="1031.7" cy="476.1" r="2.6" fill="url(#dp)"/><circle cx="1030.9" cy="520.4" r="4.2" fill="#e6e80e"/><circle cx="1084.0" cy="462.8" r="4.3" fill="#0cc7aa"/><circle cx="1034.2" cy="521.8" r="4.4" fill="#993c7a"/><circle cx="1034.2" cy="521.8" r="3.8" fill="url(#dp)"/><circle cx="1037.6" cy="478.5" r="3.6" fill="#a6c129"/><circle cx="1037.6" cy="478.5" r="3.0" fill="url(#dp)"/><circle cx="1039.9" cy="497.2" r="4.0" fill="#c5ea26"/><circle cx="1037.5" cy="479.8" r="3.0" fill="#15b127"/><circle cx="1042.6" cy="519.7" r="3.0" fill="#70345c"/><circle cx="1042.6" cy="519.7" r="2.4" fill="url(#dp)"/><circle cx="1073.0" cy="464.4" r="4.8" fill="#8a2d90"/><circle cx="1032.3" cy="484.7" r="4.5" fill="#130893"/><circle cx="1061.1" cy="520.9" r="4.0" fill="#2ded56"/><circle cx="1103.0" cy="522.4" r="3.7" fill="#4ebf2d"/><circle cx="1103.0" cy="522.4" r="3.1" fill="url(#dp)"/><circle cx="1045.7" cy="475.7" r="3.6" fill="#7a7b10"/><circle cx="1045.7" cy="475.7" r="3.0" fill="url(#dp)"/><circle cx="1038.7" cy="475.1" r="2.9" fill="#5aa9db"/><circle cx="1071.5" cy="504.7" r="3.4" fill="#571e7f"/><circle cx="1034.9" cy="478.4" r="3.2" fill="#2f6f45"/><circle cx="1033.9" cy="477.1" r="3.9" fill="#1d1776"/><circle cx="1033.9" cy="477.1" r="3.3" fill="url(#dp)"/><circle cx="1028.8" cy="477.6" r="3.6" fill="#6cb873"/><circle cx="1059.9" cy="515.0" r="3.6" fill="#eb902c"/><circle cx="1059.9" cy="515.0" r="3.0" fill="url(#dp)"/><circle cx="1025.6" cy="517.1" r="4.4" fill="#3861e7"/><circle cx="1025.6" cy="517.1" r="3.8" fill="url(#dp)"/><circle cx="1051.6" cy="520.1" r="4.4" fill="#2cb2c6"/><circle cx="1051.6" cy="520.1" r="3.8" fill="url(#dp)"/><circle cx="1061.4" cy="513.0" r="3.7" fill="#a2ad10"/><circle cx="1058.2" cy="477.3" r="4.3" fill="#843ed3"/><circle cx="1101.7" cy="451.6" r="4.4" fill="#d75688"/><circle cx="1101.7" cy="451.6" r="3.8" fill="url(#dp)"/><circle cx="1034.1" cy="496.2" r="3.7" fill="#317b47"/><circle cx="1064.6" cy="471.2" r="4.0" fill="#b2606e"/><circle cx="1104.0" cy="523.0" r="3.7" fill="#b224ed"/><circle cx="1104.0" cy="523.0" r="3.1" fill="url(#dp)"/><circle cx="1082.3" cy="511.8" r="5.3" fill="#765d0c"/><circle cx="1033.0" cy="477.3" r="3.3" fill="#bf8762"/><circle cx="1033.0" cy="477.3" r="2.7" fill="url(#dp)"/><circle cx="1108.0" cy="450.2" r="5.1" fill="#23e0de"/><circle cx="1108.0" cy="450.2" r="4.5" fill="url(#dp)"/><circle cx="1064.5" cy="511.2" r="3.3" fill="#48a6d2"/><circle cx="1034.9" cy="488.9" r="4.5" fill="#2c1d61"/><circle cx="1029.9" cy="491.1" r="3.5" fill="#366823"/><circle cx="1027.0" cy="488.6" r="2.9" fill="#4744ec"/><circle cx="1027.0" cy="488.6" r="2.3" fill="url(#dp)"/><circle cx="1025.8" cy="516.4" r="3.3" fill="#072cea"/><circle cx="1024.5" cy="489.3" r="3.3" fill="#472893"/><circle cx="1054.6" cy="522.9" r="4.0" fill="#1d7d3f"/><circle cx="1027.4" cy="491.9" r="4.1" fill="#cece0e"/><circle cx="1027.4" cy="491.9" r="3.5" fill="url(#dp)"/><circle cx="1069.9" cy="501.7" r="3.3" fill="#197f6a"/><circle cx="1069.9" cy="501.7" r="2.7" fill="url(#dp)"/><circle cx="1041.8" cy="509.9" r="3.9" fill="#a50e6c"/><circle cx="1041.8" cy="509.9" r="3.3" fill="url(#dp)"/><circle cx="1066.3" cy="516.3" r="4.4" fill="#4d9c27"/><circle cx="1073.2" cy="503.2" r="4.3" fill="#7b1578"/><circle cx="1073.2" cy="503.2" r="3.7" fill="url(#dp)"/><circle cx="1031.8" cy="477.1" r="3.2" fill="#460377"/><circle cx="1095.8" cy="502.4" r="4.3" fill="#5b2630"/><circle cx="1056.6" cy="510.3" r="3.2" fill="#8c4737"/><circle cx="1056.6" cy="510.3" r="2.6" fill="url(#dp)"/><circle cx="1030.5" cy="513.2" r="4.5" fill="#4139b9"/><circle cx="1060.7" cy="516.3" r="4.5" fill="#507033"/><circle cx="1060.7" cy="516.3" r="3.9" fill="url(#dp)"/><circle cx="1054.2" cy="499.2" r="3.1" fill="#4277ce"/><circle cx="1058.3" cy="501.6" r="4.0" fill="#a722ab"/><circle cx="1107.7" cy="521.5" r="3.7" fill="#874acb"/><circle cx="1087.5" cy="523.8" r="5.4" fill="#da5d3c"/><circle cx="1079.3" cy="440.3" r="4.3" fill="#af4b3f"/><circle cx="1079.3" cy="440.3" r="3.7" fill="url(#dp)"/><circle cx="1036.1" cy="503.9" r="4.5" fill="#692966"/><circle cx="1047.3" cy="490.7" r="4.6" fill="#2b8c0e"/><circle cx="1047.3" cy="490.7" r="4.0" fill="url(#dp)"/><circle cx="1025.7" cy="482.9" r="3.7" fill="#236f6f"/><circle cx="1060.1" cy="513.1" r="4.0" fill="#22772a"/><circle cx="1094.9" cy="504.4" r="3.9" fill="#5fced9"/><circle cx="1094.9" cy="504.4" r="3.3" fill="url(#dp)"/><circle cx="1057.3" cy="489.5" r="3.5" fill="#d1d115"/><circle cx="1039.5" cy="485.9" r="4.5" fill="#7e52af"/><circle cx="1039.5" cy="485.9" r="3.9" fill="url(#dp)"/><circle cx="1075.4" cy="513.4" r="5.3" fill="#179f8f"/><circle cx="1075.4" cy="513.4" r="4.7" fill="url(#dp)"/><circle cx="1034.7" cy="478.2" r="4.0" fill="#1d4e75"/><circle cx="1034.7" cy="478.2" r="3.4" fill="url(#dp)"/><circle cx="1067.0" cy="478.6" r="4.1" fill="#5a77cf"/><circle cx="1067.0" cy="478.6" r="3.5" fill="url(#dp)"/><circle cx="1029.8" cy="488.9" r="3.5" fill="#954082"/><circle cx="1062.9" cy="485.4" r="3.4" fill="#80be70"/><circle cx="1038.1" cy="477.3" r="3.1" fill="#da257b"/><circle cx="1069.2" cy="514.3" r="3.4" fill="#70a32f"/><circle cx="1059.4" cy="472.2" r="5.2" fill="#99de33"/><circle cx="1059.4" cy="472.2" r="4.6" fill="url(#dp)"/><circle cx="1024.2" cy="520.7" r="3.7" fill="#792766"/><circle cx="1028.7" cy="494.1" r="3.2" fill="#18518b"/><circle cx="1061.0" cy="510.6" r="4.3" fill="#281cba"/><circle cx="1061.0" cy="510.6" r="3.7" fill="url(#dp)"/><circle cx="1069.4" cy="522.0" r="4.5" fill="#a2710b"/><circle cx="1069.4" cy="522.0" r="3.9" fill="url(#dp)"/><circle cx="1091.4" cy="500.7" r="4.5" fill="#b672c5"/><circle cx="1068.4" cy="483.1" r="3.6" fill="#49c751"/><circle cx="1026.2" cy="490.2" r="3.5" fill="#a63329"/><circle cx="1046.9" cy="479.6" r="4.5" fill="#0deb56"/><circle cx="1028.4" cy="496.0" r="3.8" fill="#2e386d"/><circle cx="1061.2" cy="466.7" r="3.4" fill="#341ecb"/><circle cx="1025.6" cy="477.5" r="3.7" fill="#1d6c0e"/><circle cx="1025.6" cy="477.5" r="3.1" fill="url(#dp)"/><circle cx="1036.0" cy="491.5" r="3.6" fill="#3fcb31"/><circle cx="1046.3" cy="504.0" r="3.2" fill="#c53756"/><circle cx="1105.5" cy="515.3" r="5.2" fill="#a6c949"/><circle cx="1035.2" cy="505.1" r="3.3" fill="#6ec59b"/><circle cx="1035.2" cy="505.1" r="2.7" fill="url(#dp)"/><circle cx="1069.3" cy="457.3" r="4.0" fill="#62c85c"/><circle cx="1069.3" cy="457.3" r="3.4" fill="url(#dp)"/><circle cx="1067.9" cy="507.4" r="4.5" fill="#a34737"/><circle cx="1035.8" cy="476.3" r="3.2" fill="#d645b1"/><circle cx="1035.8" cy="476.3" r="2.6" fill="url(#dp)"/><circle cx="1027.5" cy="476.6" r="2.9" fill="#a41d6b"/><circle cx="1052.3" cy="479.7" r="3.6" fill="#754db0"/><circle cx="1064.1" cy="519.9" r="5.2" fill="#2d7330"/><circle cx="1061.2" cy="502.4" r="3.9" fill="#4b3496"/><circle cx="1061.2" cy="502.4" r="3.3" fill="url(#dp)"/><circle cx="1036.1" cy="508.5" r="3.3" fill="#205c7c"/><circle cx="1036.1" cy="508.5" r="2.7" fill="url(#dp)"/><circle cx="1065.7" cy="489.8" r="3.5" fill="#cac25b"/><circle cx="1065.7" cy="489.8" r="2.9" fill="url(#dp)"/><circle cx="1069.4" cy="487.1" r="3.8" fill="#decb5e"/><circle cx="1069.4" cy="487.1" r="3.2" fill="url(#dp)"/><circle cx="1030.8" cy="475.3" r="3.9" fill="#076acc"/><circle cx="1048.5" cy="464.0" r="3.9" fill="#29795a"/><circle cx="1068.1" cy="501.9" r="4.9" fill="#bf6f10"/><circle cx="1055.3" cy="489.0" r="3.0" fill="#c4b454"/><circle cx="1055.3" cy="489.0" r="2.4" fill="url(#dp)"/><circle cx="1055.9" cy="519.9" r="4.2" fill="#bd4ab9"/><circle cx="1034.5" cy="482.1" r="3.2" fill="#ca6748"/><circle cx="1033.5" cy="509.7" r="3.6" fill="#31b620"/><circle cx="1033.5" cy="509.7" r="3.0" fill="url(#dp)"/><circle cx="1035.6" cy="482.2" r="3.1" fill="#53d3e7"/><circle cx="1086.7" cy="513.9" r="3.6" fill="#409365"/><circle cx="1064.2" cy="506.3" r="3.8" fill="#4c57be"/><circle cx="1047.9" cy="517.9" r="3.9" fill="#a8422a"/><circle cx="1101.9" cy="505.1" r="4.5" fill="#ca1f3e"/><circle cx="1101.9" cy="505.1" r="3.9" fill="url(#dp)"/><circle cx="1039.9" cy="480.0" r="3.3" fill="#a04053"/><circle cx="1068.1" cy="489.3" r="4.1" fill="#8a2763"/><circle cx="1027.3" cy="479.2" r="2.9" fill="#3b890b"/><circle cx="1054.3" cy="515.5" r="3.0" fill="#be6bb3"/><circle cx="1028.9" cy="478.7" r="4.3" fill="#cc41e1"/><circle cx="1044.4" cy="478.2" r="4.8" fill="#b25588"/><circle cx="1044.4" cy="478.2" r="4.2" fill="url(#dp)"/><circle cx="1062.7" cy="449.2" r="4.2" fill="#2bc6a5"/><circle cx="1062.7" cy="449.2" r="3.6" fill="url(#dp)"/><circle cx="1030.8" cy="520.4" r="4.3" fill="#f0dd51"/><circle cx="1106.0" cy="498.8" r="3.8" fill="#201a71"/><circle cx="1069.4" cy="482.1" r="3.9" fill="#334d92"/><circle cx="1069.4" cy="482.1" r="3.3" fill="url(#dp)"/><circle cx="1037.7" cy="504.2" r="3.5" fill="#502d7f"/><circle cx="1037.7" cy="504.2" r="2.9" fill="url(#dp)"/><circle cx="1053.4" cy="489.6" r="4.1" fill="#245d1d"/><circle cx="1058.2" cy="508.7" r="3.1" fill="#a10573"/><circle cx="1048.0" cy="477.2" r="3.3" fill="#68441a"/><circle cx="1048.0" cy="477.2" r="2.7" fill="url(#dp)"/><circle cx="1028.1" cy="480.7" r="3.4" fill="#57781c"/><circle cx="1062.7" cy="438.7" r="5.2" fill="#860ba2"/><circle cx="1062.7" cy="438.7" r="4.6" fill="url(#dp)"/><circle cx="1102.6" cy="516.3" r="4.2" fill="#63c3b5"/><circle cx="1102.6" cy="516.3" r="3.6" fill="url(#dp)"/><circle cx="1026.3" cy="511.9" r="3.3" fill="#b76771"/><circle cx="1026.3" cy="511.9" r="2.7" fill="url(#dp)"/><circle cx="1065.7" cy="519.6" r="3.8" fill="#4299c4"/><circle cx="1065.7" cy="519.6" r="3.2" fill="url(#dp)"/><circle cx="1046.5" cy="502.2" r="4.2" fill="#86a828"/><circle cx="1036.2" cy="477.2" r="3.6" fill="#5be178"/><circle cx="1031.3" cy="514.7" r="3.2" fill="#34ef84"/><circle cx="1031.3" cy="514.7" r="2.6" fill="url(#dp)"/><circle cx="1082.3" cy="521.4" r="3.5" fill="#09a89a"/><circle cx="1082.3" cy="521.4" r="2.9" fill="url(#dp)"/><circle cx="1030.3" cy="486.2" r="3.0" fill="#327836"/><circle cx="1030.3" cy="486.2" r="2.4" fill="url(#dp)"/><circle cx="1042.8" cy="500.4" r="4.6" fill="#973a98"/><circle cx="1027.6" cy="481.6" r="3.7" fill="#3b2089"/><circle cx="1060.6" cy="463.4" r="4.5" fill="#5bcf0b"/><circle cx="1042.1" cy="505.1" r="2.8" fill="#0b9f1c"/><circle cx="1077.0" cy="467.3" r="4.1" fill="#7acb9f"/><circle cx="1077.0" cy="467.3" r="3.5" fill="url(#dp)"/><circle cx="1041.2" cy="487.6" r="3.2" fill="#a2b741"/><circle cx="1096.5" cy="510.1" r="3.6" fill="#2aa024"/><circle cx="1096.5" cy="510.1" r="3.0" fill="url(#dp)"/><circle cx="1037.5" cy="524.0" r="3.0" fill="#0f8a4d"/><circle cx="1100.8" cy="467.8" r="4.3" fill="#666bcc"/><circle cx="1036.4" cy="475.6" r="2.9" fill="#d6da48"/><circle cx="1028.6" cy="492.5" r="3.3" fill="#80661c"/><circle cx="1028.6" cy="492.5" r="2.7" fill="url(#dp)"/><circle cx="1048.5" cy="482.8" r="4.1" fill="#9f0caf"/><circle cx="1029.3" cy="475.3" r="3.8" fill="#354c76"/><circle cx="1029.3" cy="475.3" r="3.2" fill="url(#dp)"/><circle cx="1048.9" cy="501.2" r="4.3" fill="#bb12de"/><circle cx="1026.4" cy="495.9" r="4.4" fill="#eb5abf"/><circle cx="1044.5" cy="501.2" r="2.8" fill="#f7d421"/><circle cx="1055.5" cy="494.4" r="4.5" fill="#bb67b1"/><circle cx="1040.5" cy="513.3" r="3.1" fill="#c9579e"/><circle cx="1040.5" cy="513.3" r="2.5" fill="url(#dp)"/><circle cx="1086.6" cy="462.1" r="4.8" fill="#3c1a67"/><circle cx="1032.7" cy="523.8" r="4.1" fill="#895605"/><circle cx="1032.7" cy="523.8" r="3.5" fill="url(#dp)"/><circle cx="1031.4" cy="477.7" r="3.8" fill="#071a85"/><circle cx="1068.5" cy="517.4" r="3.9" fill="#54cdab"/><circle cx="1028.5" cy="493.4" r="3.3" fill="#5a235b"/><circle cx="1035.2" cy="479.0" r="3.2" fill="#29df80"/><circle cx="1035.2" cy="479.0" r="2.6" fill="url(#dp)"/><circle cx="1050.1" cy="506.4" r="3.6" fill="#357d2a"/><circle cx="1107.8" cy="515.4" r="4.7" fill="#971648"/><circle cx="1107.8" cy="515.4" r="4.1" fill="url(#dp)"/><circle cx="1033.4" cy="489.2" r="3.9" fill="#20265b"/><circle cx="1033.4" cy="489.2" r="3.3" fill="url(#dp)"/><circle cx="1036.3" cy="497.3" r="3.9" fill="#6f077b"/><circle cx="1035.1" cy="520.6" r="3.9" fill="#705ae7"/><circle cx="1038.5" cy="494.1" r="2.8" fill="#29b752"/><circle cx="1038.5" cy="494.1" r="2.2" fill="url(#dp)"/><circle cx="1052.6" cy="504.7" r="3.7" fill="#7d6ac1"/><circle cx="1042.0" cy="513.1" r="2.9" fill="#d608a5"/><circle cx="1067.8" cy="502.8" r="4.9" fill="#5c233e"/><circle cx="1046.8" cy="474.4" r="3.7" fill="#411977"/><circle cx="1046.8" cy="474.4" r="3.1" fill="url(#dp)"/><circle cx="1038.8" cy="517.3" r="2.8" fill="#490a88"/><circle cx="1045.1" cy="489.6" r="4.5" fill="#901b2e"/><circle cx="1064.3" cy="520.9" r="2.9" fill="#3e722e"/><circle cx="1059.1" cy="503.5" r="3.1" fill="#068975"/><circle cx="1102.9" cy="501.3" r="4.1" fill="#7518f5"/><circle cx="1102.9" cy="501.3" r="3.5" fill="url(#dp)"/><circle cx="1047.3" cy="515.6" r="4.5" fill="#b7c673"/><circle cx="1087.3" cy="447.3" r="5.3" fill="#7d4da6"/><circle cx="1077.8" cy="465.1" r="3.4" fill="#785104"/><circle cx="1032.8" cy="485.7" r="4.1" fill="#1fac38"/><circle cx="1029.8" cy="479.0" r="2.9" fill="#3080af"/><circle cx="1029.8" cy="479.0" r="2.3" fill="url(#dp)"/><circle cx="1029.5" cy="487.7" r="3.9" fill="#ac1e4b"/><circle cx="1068.6" cy="493.6" r="3.1" fill="#b26555"/><circle cx="1024.4" cy="492.9" r="3.9" fill="#7dc0c5"/><circle cx="1067.2" cy="498.7" r="4.9" fill="#7a2577"/><circle cx="1033.6" cy="520.5" r="3.7" fill="#c0f550"/><circle cx="1055.6" cy="512.6" r="3.1" fill="#16da92"/><circle cx="1055.6" cy="512.6" r="2.5" fill="url(#dp)"/><circle cx="1025.9" cy="512.2" r="3.6" fill="#5c179c"/><circle cx="1025.9" cy="512.2" r="3.0" fill="url(#dp)"/><circle cx="1036.9" cy="476.3" r="3.9" fill="#8352b5"/><circle cx="1036.9" cy="476.3" r="3.3" fill="url(#dp)"/><circle cx="1044.4" cy="504.6" r="4.1" fill="#4cc18a"/><circle cx="1060.4" cy="520.8" r="3.6" fill="#2757bb"/><circle cx="1071.4" cy="479.5" r="5.0" fill="#d17353"/><circle cx="1034.4" cy="523.0" r="4.1" fill="#968e2b"/><circle cx="1047.4" cy="479.8" r="3.6" fill="#b8a427"/><circle cx="1064.0" cy="503.8" r="3.9" fill="#1a43c3"/><circle cx="1064.0" cy="503.8" r="3.3" fill="url(#dp)"/><circle cx="1072.4" cy="499.1" r="4.5" fill="#1e4deb"/><circle cx="1026.0" cy="476.9" r="3.1" fill="#a07e13"/><circle cx="1059.5" cy="498.1" r="4.4" fill="#296380"/><circle cx="1059.5" cy="498.1" r="3.8" fill="url(#dp)"/><circle cx="1057.5" cy="481.3" r="2.9" fill="#251b6e"/><circle cx="1097.0" cy="518.6" r="5.0" fill="#6aed54"/><circle cx="1031.6" cy="500.6" r="3.4" fill="#c879a7"/><circle cx="1031.6" cy="500.6" r="2.8" fill="url(#dp)"/><circle cx="1041.2" cy="482.9" r="4.3" fill="#b4282e"/><circle cx="1041.2" cy="482.9" r="3.7" fill="url(#dp)"/><circle cx="1062.2" cy="495.8" r="3.5" fill="#744f12"/><circle cx="1062.2" cy="495.8" r="2.9" fill="url(#dp)"/><circle cx="1033.6" cy="484.8" r="3.4" fill="#674231"/><circle cx="1033.6" cy="484.8" r="2.8" fill="url(#dp)"/><circle cx="1051.0" cy="491.0" r="2.9" fill="#e63d57"/><circle cx="1051.0" cy="491.0" r="2.3" fill="url(#dp)"/><circle cx="1062.4" cy="495.8" r="3.2" fill="#eac135"/><circle cx="1033.1" cy="481.0" r="3.4" fill="#18a1b1"/><circle cx="1033.1" cy="481.0" r="2.8" fill="url(#dp)"/><circle cx="1066.4" cy="516.0" r="3.9" fill="#e00a79"/><circle cx="1029.8" cy="480.4" r="4.1" fill="#436526"/><circle cx="1062.5" cy="520.8" r="4.3" fill="#9d4696"/><circle cx="1044.0" cy="520.7" r="4.3" fill="#96c66e"/><circle cx="1035.8" cy="523.3" r="4.1" fill="#ad5851"/><circle cx="1056.4" cy="490.1" r="3.8" fill="#951850"/><circle cx="1088.6" cy="517.3" r="4.9" fill="#f8b115"/><circle cx="1088.6" cy="517.3" r="4.3" fill="url(#dp)"/><circle cx="1045.7" cy="505.0" r="4.4" fill="#0bd575"/><circle cx="1038.7" cy="477.1" r="2.9" fill="#b5a51d"/><circle cx="1040.1" cy="516.9" r="4.1" fill="#273c99"/><circle cx="1040.1" cy="516.9" r="3.5" fill="url(#dp)"/><circle cx="1064.7" cy="518.9" r="2.8" fill="#e86749"/><circle cx="1031.0" cy="484.5" r="3.2" fill="#1e811a"/><circle cx="1031.0" cy="484.5" r="2.6" fill="url(#dp)"/><circle cx="1077.8" cy="502.1" r="4.4" fill="#760b5c"/><circle cx="1077.8" cy="502.1" r="3.8" fill="url(#dp)"/><circle cx="1033.8" cy="506.9" r="2.9" fill="#5b2441"/><circle cx="1033.8" cy="506.9" r="2.3" fill="url(#dp)"/><circle cx="1056.4" cy="485.9" r="3.4" fill="#abd514"/><circle cx="1056.4" cy="485.9" r="2.8" fill="url(#dp)"/><circle cx="1030.7" cy="479.1" r="4.6" fill="#49b163"/><circle cx="1058.4" cy="488.6" r="4.1" fill="#acb760"/><circle cx="1069.3" cy="490.6" r="3.2" fill="#2b1977"/><circle cx="1093.1" cy="463.7" r="3.9" fill="#15e284"/><circle cx="1093.1" cy="463.7" r="3.3" fill="url(#dp)"/><circle cx="1051.1" cy="519.6" r="4.1" fill="#2eb76f"/><circle cx="1051.1" cy="519.6" r="3.5" fill="url(#dp)"/><circle cx="1059.4" cy="487.9" r="3.7" fill="#28572e"/><circle cx="1059.4" cy="487.9" r="3.1" fill="url(#dp)"/><circle cx="1090.6" cy="513.0" r="4.7" fill="#477ac9"/><circle cx="1090.6" cy="513.0" r="4.1" fill="url(#dp)"/><circle cx="1059.8" cy="469.4" r="3.8" fill="#dbbc0a"/><circle cx="1090.3" cy="439.3" r="4.6" fill="#b2a609"/><circle cx="1056.2" cy="497.2" r="3.3" fill="#0808a0"/><circle cx="1056.2" cy="497.2" r="2.7" fill="url(#dp)"/><circle cx="1040.3" cy="510.8" r="3.8" fill="#5e8309"/><circle cx="1039.2" cy="484.2" r="4.0" fill="#a45920"/><circle cx="1039.2" cy="484.2" r="3.4" fill="url(#dp)"/><circle cx="1039.9" cy="503.5" r="4.5" fill="#68a441"/><circle cx="1039.9" cy="503.5" r="3.9" fill="url(#dp)"/><circle cx="1048.0" cy="479.2" r="4.0" fill="#680a95"/><circle cx="1046.5" cy="514.7" r="4.1" fill="#c26997"/><circle cx="1046.5" cy="514.7" r="3.5" fill="url(#dp)"/><circle cx="1082.6" cy="453.8" r="3.6" fill="#a94a99"/><circle cx="1082.6" cy="453.8" r="3.0" fill="url(#dp)"/><circle cx="1066.9" cy="483.3" r="3.2" fill="#272a53"/><circle cx="1066.9" cy="483.3" r="2.6" fill="url(#dp)"/><circle cx="1053.4" cy="517.8" r="4.3" fill="#2bd2e6"/><circle cx="1025.1" cy="503.5" r="3.4" fill="#f35063"/><circle cx="1025.1" cy="503.5" r="2.8" fill="url(#dp)"/><circle cx="1105.3" cy="510.2" r="4.3" fill="#245578"/><circle cx="1105.3" cy="510.2" r="3.7" fill="url(#dp)"/><circle cx="1090.3" cy="500.2" r="3.8" fill="#0564bd"/><circle cx="1052.6" cy="503.4" r="3.9" fill="#47c130"/><circle cx="1062.9" cy="518.6" r="3.8" fill="#74ef2f"/><circle cx="1027.3" cy="484.1" r="3.3" fill="#7137b6"/><circle cx="1027.3" cy="484.1" r="2.7" fill="url(#dp)"/><circle cx="1069.5" cy="484.0" r="3.5" fill="#6b9204"/><circle cx="1069.5" cy="484.0" r="2.9" fill="url(#dp)"/><circle cx="1039.9" cy="486.4" r="3.4" fill="#674ba0"/><circle cx="1100.3" cy="515.1" r="4.7" fill="#53c868"/><circle cx="1035.6" cy="516.2" r="2.9" fill="#8f5a12"/><circle cx="1035.6" cy="516.2" r="2.3" fill="url(#dp)"/><circle cx="1060.6" cy="505.1" r="3.7" fill="#af1f40"/><circle cx="1031.0" cy="478.4" r="3.5" fill="#d5079c"/><circle cx="1046.5" cy="483.5" r="4.5" fill="#496627"/><circle cx="1030.1" cy="518.1" r="4.6" fill="#420d94"/><circle cx="1065.5" cy="500.3" r="3.8" fill="#5cbe13"/><circle cx="1037.8" cy="522.7" r="3.7" fill="#8d9935"/><circle cx="1088.8" cy="459.6" r="5.0" fill="#665223"/><circle cx="1064.1" cy="479.3" r="4.2" fill="#805ce6"/><circle cx="1064.1" cy="479.3" r="3.6" fill="url(#dp)"/><circle cx="1077.4" cy="511.3" r="4.6" fill="#3b6517"/><circle cx="1060.3" cy="513.6" r="4.1" fill="#dc7567"/><circle cx="1060.3" cy="513.6" r="3.5" fill="url(#dp)"/><circle cx="1052.3" cy="504.8" r="3.6" fill="#d209ca"/><circle cx="1047.3" cy="515.2" r="3.1" fill="#55ceca"/><circle cx="1047.3" cy="515.2" r="2.5" fill="url(#dp)"/><circle cx="1027.6" cy="479.4" r="3.8" fill="#da61bf"/><circle cx="1029.1" cy="502.5" r="3.9" fill="#0edc2f"/><circle cx="1046.5" cy="511.8" r="3.8" fill="#2ec327"/><circle cx="1057.8" cy="516.0" r="3.8" fill="#a2b659"/><circle cx="1027.3" cy="481.2" r="3.9" fill="#277c7a"/><circle cx="1105.3" cy="431.5" r="4.2" fill="#81bbc2"/><circle cx="1105.3" cy="431.5" r="3.6" fill="url(#dp)"/><circle cx="1029.5" cy="523.3" r="3.2" fill="#34ed4e"/><circle cx="1025.6" cy="476.9" r="3.6" fill="#cddd11"/><circle cx="1038.3" cy="488.2" r="3.9" fill="#1ac2e5"/><circle cx="1027.4" cy="514.8" r="4.1" fill="#801aa8"/><circle cx="1050.4" cy="462.3" r="3.9" fill="#9b6946"/><circle cx="1041.1" cy="478.2" r="4.4" fill="#30487d"/><circle cx="1041.1" cy="478.2" r="3.8" fill="url(#dp)"/><circle cx="1065.7" cy="509.2" r="3.3" fill="#71a433"/><circle cx="1065.7" cy="509.2" r="2.7" fill="url(#dp)"/><circle cx="1058.5" cy="490.5" r="3.2" fill="#3fab26"/><circle cx="1099.5" cy="502.6" r="4.7" fill="#427dd3"/><circle cx="1057.3" cy="512.4" r="2.9" fill="#518bcf"/><circle cx="1054.3" cy="514.6" r="2.9" fill="#530ddb"/><circle cx="1054.3" cy="514.6" r="2.3" fill="url(#dp)"/><circle cx="1054.9" cy="513.7" r="3.6" fill="#629db7"/><circle cx="1054.9" cy="513.7" r="3.0" fill="url(#dp)"/><circle cx="1100.4" cy="499.6" r="3.9" fill="#4ea562"/><circle cx="1100.4" cy="499.6" r="3.3" fill="url(#dp)"/><circle cx="1063.3" cy="501.4" r="4.4" fill="#7c66ca"/><circle cx="1052.9" cy="523.9" r="4.3" fill="#305ca1"/><circle cx="1033.5" cy="523.6" r="3.4" fill="#762a7c"/><circle cx="1070.6" cy="482.0" r="3.3" fill="#a13210"/><circle cx="1070.6" cy="482.0" r="2.7" fill="url(#dp)"/><circle cx="1069.6" cy="520.3" r="4.0" fill="#1fa63b"/><circle cx="1030.1" cy="505.4" r="4.3" fill="#dac737"/><circle cx="1030.1" cy="505.4" r="3.7" fill="url(#dp)"/><circle cx="1035.7" cy="475.2" r="2.8" fill="#878430"/><circle cx="1035.7" cy="475.2" r="2.2" fill="url(#dp)"/><circle cx="1062.4" cy="512.4" r="4.3" fill="#711ba2"/><circle cx="1062.4" cy="512.4" r="3.7" fill="url(#dp)"/><circle cx="1066.3" cy="482.0" r="4.6" fill="#4c69d0"/><circle cx="1066.3" cy="482.0" r="4.0" fill="url(#dp)"/><circle cx="1038.1" cy="475.7" r="3.4" fill="#50a8c6"/><circle cx="1038.1" cy="475.7" r="2.8" fill="url(#dp)"/><circle cx="1058.1" cy="520.3" r="3.3" fill="#6dd886"/><circle cx="1044.0" cy="498.8" r="3.9" fill="#51e695"/><circle cx="1044.0" cy="498.8" r="3.3" fill="url(#dp)"/><circle cx="1064.2" cy="510.5" r="4.3" fill="#19d58e"/><circle cx="1064.2" cy="510.5" r="3.7" fill="url(#dp)"/><circle cx="1048.5" cy="506.6" r="4.0" fill="#f26827"/><circle cx="1040.6" cy="489.7" r="3.2" fill="#6809dc"/><circle cx="1040.6" cy="489.7" r="2.6" fill="url(#dp)"/><circle cx="1053.6" cy="509.4" r="4.1" fill="#801277"/><circle cx="1098.9" cy="520.4" r="4.0" fill="#c87008"/><circle cx="1072.6" cy="524.5" r="4.4" fill="#5067cd"/><circle cx="1024.7" cy="477.2" r="3.7" fill="#23735b"/><circle cx="1024.7" cy="477.2" r="3.1" fill="url(#dp)"/><circle cx="1050.0" cy="451.4" r="8.8" fill="#c0f0e0"/><circle cx="1050.6" cy="448.2" r="5.2" fill="#a8e860"/><circle cx="1050.6" cy="448.2" r="4.6" fill="url(#dp)"/><circle cx="1049.6" cy="458.1" r="4.4" fill="#5a8890"/><circle cx="1056.4" cy="455.8" r="3.2" fill="#a050d0"/><circle cx="1056.4" cy="455.8" r="2.6" fill="url(#dp)"/><circle cx="1064.3" cy="457.7" r="4.4" fill="#c8e050"/><circle cx="1059.6" cy="460.1" r="4.1" fill="#c0f0a0"/><circle cx="1059.6" cy="460.1" r="3.4" fill="#1a5a40"/><circle cx="1059.6" cy="460.1" r="2.8" fill="url(#dp)"/><circle cx="1071.1" cy="462.5" r="6.8" fill="#80e0b0"/><circle cx="1071.1" cy="462.5" r="6.2" fill="url(#dp)"/><circle cx="1048.4" cy="468.5" r="4.4" fill="#80c0b0"/><circle cx="1048.4" cy="468.5" r="3.8" fill="url(#dp)"/><circle cx="1064.3" cy="471.3" r="5.6" fill="#b0b0d0"/><circle cx="1048.8" cy="472.9" r="2.8" fill="#f0c840"/><circle cx="1054.8" cy="470.9" r="4.0" fill="#4060b0"/><circle cx="1054.8" cy="470.9" r="3.4" fill="url(#dp)"/><circle cx="1069.1" cy="469.3" r="6.0" fill="#88c080"/><circle cx="1075.9" cy="478.8" r="6.4" fill="#b03020"/><circle cx="1075.9" cy="478.8" r="5.8" fill="url(#dp)"/><circle cx="1076.2" cy="472.2" r="4.6" fill="#804070"/><circle cx="1036.4" cy="478.2" r="4.0" fill="#8a1818"/><circle cx="1031.4" cy="476.8" r="4.8" fill="#a08868"/><circle cx="1031.4" cy="476.8" r="4.2" fill="url(#dp)"/><circle cx="1023.2" cy="481.0" r="3.8" fill="#f08030"/><circle cx="1023.2" cy="481.0" r="3.2" fill="url(#dp)"/><circle cx="1048.7" cy="478.2" r="3.8" fill="#3060a0"/><circle cx="1048.7" cy="478.2" r="3.2" fill="url(#dp)"/><circle cx="1054.9" cy="479.2" r="5.0" fill="#90e870"/><circle cx="1046.9" cy="483.8" r="5.6" fill="#90c0a8"/><circle cx="1065.9" cy="483.8" r="4.4" fill="#c8e860"/><circle cx="1061.6" cy="482.4" r="4.6" fill="#60a8f0"/><circle cx="1061.6" cy="482.4" r="4.0" fill="url(#dp)"/><circle cx="1030.0" cy="485.5" r="3.3" fill="#2a6040"/><circle cx="1038.5" cy="487.0" r="4.4" fill="#50b098"/><circle cx="1038.5" cy="487.0" r="3.8" fill="url(#dp)"/><circle cx="1046.1" cy="489.5" r="4.4" fill="#2a6e62"/><circle cx="1053.3" cy="490.8" r="4.4" fill="#70e0c8"/><circle cx="1061.2" cy="491.6" r="5.2" fill="#e040c0"/><circle cx="1078.6" cy="487.8" r="7.0" fill="#a06080"/><circle cx="1078.6" cy="487.8" r="6.4" fill="url(#dp)"/><circle cx="1027.1" cy="493.1" r="3.6" fill="#4080e0"/><circle cx="1033.5" cy="492.7" r="3.6" fill="#a060e0"/><circle cx="1033.5" cy="492.7" r="3.0" fill="url(#dp)"/><circle cx="1026.9" cy="488.8" r="3.2" fill="#e04040"/><circle cx="1021.0" cy="490.4" r="2.6" fill="#c030c0"/><circle cx="1035.5" cy="498.2" r="3.3" fill="#908080"/><circle cx="1035.5" cy="498.2" r="2.7" fill="url(#dp)"/><circle cx="1045.0" cy="497.9" r="4.8" fill="#306088"/><circle cx="1045.0" cy="497.9" r="4.2" fill="url(#dp)"/><circle cx="1028.7" cy="500.6" r="4.0" fill="#804090"/><circle cx="1039.4" cy="501.4" r="4.4" fill="#3080d8"/><circle cx="1058.1" cy="500.6" r="6.0" fill="#50b070"/><circle cx="1068.5" cy="503.0" r="5.6" fill="#101880"/><circle cx="1073.7" cy="505.0" r="3.2" fill="#f08030"/><circle cx="1080.0" cy="499.4" r="5.7" fill="#b04068"/><circle cx="1029.9" cy="505.0" r="2.8" fill="#d0b060"/><circle cx="1030.3" cy="508.2" r="3.6" fill="#3a8030"/><circle cx="1049.0" cy="509.8" r="4.0" fill="#50a0e0"/><circle cx="1066.0" cy="508.0" r="4.8" fill="#5a8890"/><circle cx="1069.3" cy="509.8" r="6.0" fill="#6840b0"/><circle cx="1069.3" cy="509.8" r="5.4" fill="url(#dp)"/><circle cx="1078.4" cy="511.4" r="5.2" fill="#80e8d0"/><circle cx="1078.4" cy="511.4" r="4.6" fill="url(#dp)"/><circle cx="1038.2" cy="513.4" r="3.6" fill="#4a5020"/><circle cx="1043.4" cy="513.4" r="3.6" fill="#508090"/><circle cx="1029.9" cy="514.6" r="3.2" fill="#2040c0"/><circle cx="1021.9" cy="513.8" r="3.2" fill="#c040a0"/><circle cx="1027.1" cy="518.1" r="3.8" fill="#90c0f0"/><circle cx="1027.1" cy="518.1" r="3.2" fill="url(#dp)"/><circle cx="1037.9" cy="520.5" r="3.6" fill="#c070e0"/><circle cx="1047.4" cy="519.7" r="4.0" fill="#a040c0"/><circle cx="1052.6" cy="522.5" r="3.6" fill="#90e8b8"/><circle cx="1059.3" cy="520.9" r="4.0" fill="#80b050"/><circle cx="1067.0" cy="516.5" r="4.4" fill="#b0f0c0"/><circle cx="1072.9" cy="517.3" r="4.0" fill="#6030d0"/><circle cx="1068.5" cy="521.7" r="4.6" fill="#a03020"/><circle cx="1077.2" cy="522.5" r="3.6" fill="#4068d0"/><circle cx="1077.2" cy="522.5" r="3.0" fill="url(#dp)"/><circle cx="1083.2" cy="518.5" r="4.8" fill="#b0f0c0"/><circle cx="1025.9" cy="523.7" r="3.2" fill="#080808"/><circle cx="1084.2" cy="505.4" r="4.8" fill="#e8a060"/><circle cx="1084.2" cy="505.4" r="4.2" fill="url(#dp)"/><circle cx="1092.0" cy="502.6" r="5.2" fill="#7040c0"/><circle cx="1093.6" cy="498.2" r="2.4" fill="#1020d0"/><circle cx="1103.1" cy="496.3" r="4.8" fill="#907040"/><circle cx="1099.9" cy="495.5" r="4.9" fill="#70b8f0"/><circle cx="1099.9" cy="495.5" r="4.3" fill="url(#dp)"/><circle cx="1105.5" cy="514.6" r="4.8" fill="#282828"/><circle cx="1099.9" cy="509.0" r="5.6" fill="#90f050"/><circle cx="1108.7" cy="506.2" r="4.4" fill="#50903c"/><circle cx="1100.7" cy="518.5" r="4.9" fill="#80c840"/><circle cx="1093.2" cy="518.1" r="4.9" fill="#a06080"/><circle cx="1093.2" cy="518.1" r="4.3" fill="url(#dp)"/><circle cx="1091.6" cy="511.8" r="3.2" fill="#b08020"/><circle cx="1091.6" cy="511.8" r="2.6" fill="url(#dp)"/><circle cx="1115.0" cy="501.4" r="3.6" fill="#b060e0"/><circle cx="1115.4" cy="507.8" r="4.4" fill="#b08828"/><circle cx="1115.4" cy="507.8" r="3.8" fill="url(#dp)"/><circle cx="1110.3" cy="517.0" r="3.8" fill="#a030c0"/><circle cx="1110.3" cy="517.0" r="3.2" fill="url(#dp)"/><circle cx="1109.1" cy="522.1" r="3.3" fill="#6a3070"/><circle cx="1127.2" cy="513.3" r="6.4" fill="#b0f0d0"/><circle cx="1124.1" cy="510.8" r="4.7" fill="#1818a0"/><circle cx="1124.1" cy="510.8" r="4.1" fill="url(#dp)"/><circle cx="1122.4" cy="518.5" r="3.6" fill="#a0c8b0"/><circle cx="1120.8" cy="499.4" r="3.8" fill="#d0d8e0"/><circle cx="1073.9" cy="420.3" r="6.4" fill="#808020"/><circle cx="1085.0" cy="414.8" r="6.0" fill="#48a830"/><circle cx="1085.0" cy="414.8" r="5.4" fill="url(#dp)"/><circle cx="1080.6" cy="418.4" r="5.2" fill="#2048c0"/><circle cx="1072.7" cy="421.9" r="4.9" fill="#1818d0"/><circle cx="1067.9" cy="410.5" r="4.9" fill="#a070f0"/><circle cx="1106.5" cy="431.5" r="7.6" fill="#c0c0c0"/><circle cx="1104.5" cy="426.3" r="5.6" fill="#b028c8"/><circle cx="1086.6" cy="425.5" r="6.4" fill="#9020c0"/><circle cx="1098.2" cy="420.3" r="5.6" fill="#70c0f0"/><circle cx="1098.2" cy="420.3" r="5.0" fill="url(#dp)"/><circle cx="1094.6" cy="433.9" r="4.8" fill="#7040c0"/><circle cx="1094.6" cy="433.9" r="4.2" fill="url(#dp)"/><circle cx="1077.9" cy="432.3" r="5.7" fill="#a04a28"/><circle cx="1077.9" cy="432.3" r="5.1" fill="url(#dp)"/><circle cx="1088.2" cy="436.7" r="4.4" fill="#c04030"/><circle cx="1088.2" cy="436.7" r="3.8" fill="url(#dp)"/><circle cx="1062.7" cy="439.4" r="7.0" fill="#d0e860"/><circle cx="1067.1" cy="440.2" r="6.0" fill="#707070"/><circle cx="1068.7" cy="433.5" r="3.8" fill="#80c040"/><circle cx="1071.9" cy="447.0" r="4.4" fill="#5088e0"/><circle cx="1071.9" cy="447.0" r="3.8" fill="url(#dp)"/><circle cx="1077.1" cy="441.0" r="4.1" fill="#70e0a0"/><circle cx="1077.1" cy="441.0" r="3.5" fill="url(#dp)"/><circle cx="1081.4" cy="443.4" r="3.3" fill="#7888d0"/><circle cx="1081.4" cy="443.4" r="2.7" fill="url(#dp)"/><circle cx="1085.8" cy="452.2" r="6.4" fill="#90e070"/><circle cx="1085.8" cy="452.2" r="5.8" fill="url(#dp)"/><circle cx="1078.5" cy="450.2" r="4.1" fill="#b03090"/><circle cx="1088.6" cy="445.0" r="4.6" fill="#a04070"/><circle cx="1088.6" cy="445.0" r="4.0" fill="url(#dp)"/><circle cx="1095.4" cy="453.4" r="4.0" fill="#308030"/><circle cx="1097.8" cy="450.6" r="4.0" fill="#b0b0b0"/><circle cx="1095.0" cy="444.2" r="4.0" fill="#a0a0a0"/><circle cx="1102.3" cy="443.4" r="4.1" fill="#e0b0f0"/><circle cx="1103.3" cy="450.6" r="4.4" fill="#58c068"/><circle cx="1103.3" cy="450.6" r="3.8" fill="url(#dp)"/><circle cx="1110.9" cy="449.8" r="4.6" fill="#7080a0"/><circle cx="1110.9" cy="449.8" r="4.0" fill="url(#dp)"/><circle cx="1078.7" cy="458.5" r="4.8" fill="#9030d0"/><circle cx="1078.7" cy="458.5" r="4.2" fill="url(#dp)"/><circle cx="1087.0" cy="463.3" r="6.0" fill="#c0a840"/><circle cx="1087.0" cy="463.3" r="5.4" fill="url(#dp)"/><circle cx="1089.8" cy="460.1" r="4.4" fill="#3050a0"/><circle cx="1096.2" cy="462.1" r="4.4" fill="#78d850"/><circle cx="1105.7" cy="460.9" r="3.2" fill="#7a5020"/><circle cx="1103.3" cy="457.7" r="3.6" fill="#b070b0"/><circle cx="1103.3" cy="457.7" r="3.0" fill="url(#dp)"/><circle cx="1116.5" cy="468.9" r="4.8" fill="#b0e050"/><circle cx="1116.5" cy="468.9" r="4.2" fill="url(#dp)"/><circle cx="1107.3" cy="465.7" r="5.7" fill="#8828d0"/><circle cx="1107.3" cy="465.7" r="5.1" fill="url(#dp)"/><circle cx="1114.1" cy="461.3" r="6.5" fill="#2a2458"/><circle cx="1109.3" cy="476.0" r="5.2" fill="#404040"/><circle cx="1104.9" cy="481.6" r="3.2" fill="#404040"/><circle cx="1101.4" cy="474.0" r="7.2" fill="#7ee694"/><circle cx="1089.4" cy="475.2" r="6.8" fill="#d0e860"/><circle cx="1093.4" cy="476.8" r="4.8" fill="#a0b850"/><circle cx="1090.3" cy="473.0" r="4.8" fill="#7030e0"/><circle cx="1090.3" cy="473.0" r="4.2" fill="url(#dp)"/><circle cx="1118.4" cy="482.0" r="2.4" fill="#8a1818"/><circle cx="1111.9" cy="484.4" r="5.7" fill="#70c0b0"/><circle cx="1111.9" cy="484.4" r="5.1" fill="url(#dp)"/><circle cx="1130.2" cy="487.2" r="6.6" fill="#e890e8"/><circle cx="1122.9" cy="486.8" r="5.0" fill="#9040c0"/><circle cx="1114.2" cy="491.0" r="4.7" fill="#e04050"/><circle cx="1100.1" cy="492.8" r="3.6" fill="#60b0f0"/><circle cx="1129.3" cy="459.9" r="5.9" fill="#c0d840"/><circle cx="1084.8" cy="397.7" r="8.0" fill="#78b090"/><circle cx="1084.8" cy="397.7" r="7.4" fill="url(#dp)"/><circle cx="1100.7" cy="395.7" r="5.6" fill="#c8d840"/><circle cx="1093.6" cy="398.5" r="7.2" fill="#b0e060"/><circle cx="1093.6" cy="398.5" r="6.6" fill="url(#dp)"/><circle cx="1099.5" cy="401.3" r="7.6" fill="#80a070"/><circle cx="1108.7" cy="392.5" r="4.4" fill="#50a890"/><circle cx="1112.3" cy="400.9" r="3.8" fill="#905070"/><circle cx="1112.3" cy="400.9" r="3.2" fill="url(#dp)"/><circle cx="1122.0" cy="402.8" r="4.0" fill="#c09828"/><circle cx="1122.0" cy="402.8" r="3.4" fill="url(#dp)"/><circle cx="1109.5" cy="414.4" r="5.7" fill="#1a5a30"/><circle cx="1109.5" cy="414.4" r="5.1" fill="url(#dp)"/><circle cx="1112.1" cy="410.0" r="3.8" fill="#a060f0"/><circle cx="1112.1" cy="410.0" r="3.2" fill="url(#dp)"/><circle cx="1123.0" cy="413.2" r="5.2" fill="#f07070"/><circle cx="1128.3" cy="412.2" r="4.5" fill="#b020c0"/><circle cx="1119.0" cy="415.7" r="6.3" fill="#5c1a7a"/><circle cx="1105.5" cy="422.8" r="4.0" fill="#c030d0"/><circle cx="1116.4" cy="385.0" r="7.0" fill="#98a8e0"/><circle cx="1129.2" cy="382.7" r="6.0" fill="#3a4040"/><circle cx="1141.3" cy="381.8" r="6.5" fill="#a0c8f0"/><circle cx="1153.8" cy="370.5" r="8.5" fill="#c06a48"/><circle cx="1140.3" cy="371.5" r="7.5" fill="#8ad0c0"/><circle cx="1139.6" cy="359.1" r="6.5" fill="#a820c0"/><circle cx="1173.7" cy="381.5" r="6.5" fill="#88f050"/><circle cx="1173.7" cy="381.5" r="5.9" fill="url(#dp)"/><circle cx="1178.7" cy="371.5" r="6.0" fill="#78c848"/><circle cx="1169.2" cy="371.0" r="5.5" fill="#5aa8e8"/><circle cx="1170.9" cy="366.6" r="5.0" fill="#4a80d8"/><circle cx="1170.9" cy="366.6" r="4.4" fill="url(#dp)"/><circle cx="1158.5" cy="378.0" r="8.5" fill="#3a6088"/><circle cx="1165.2" cy="381.0" r="6.0" fill="#3a6088"/><circle cx="1181.1" cy="376.0" r="6.0" fill="#e8b888"/><circle cx="1179.5" cy="360.6" r="5.0" fill="#68c050"/><circle cx="1179.5" cy="360.6" r="4.4" fill="url(#dp)"/><circle cx="1159.8" cy="354.1" r="5.5" fill="#7a1428"/><circle cx="1162.2" cy="347.7" r="7.5" fill="#72e8d0"/><circle cx="1154.8" cy="343.5" r="7.8" fill="#72603c"/><circle cx="1167.0" cy="354.1" r="6.5" fill="#7a7a20" stroke="#101010" stroke-width="1"/><circle cx="1152.0" cy="305.9" r="8.0" fill="#4faa68"/><circle cx="1152.0" cy="305.9" r="7.4" fill="url(#dp)"/><circle cx="1179.7" cy="316.1" r="4.7" fill="#b8863a"/><circle cx="1179.7" cy="316.1" r="4.1" fill="url(#dp)"/><circle cx="1195.4" cy="341.2" r="8.5" fill="#3a74cc"/><circle cx="1194.1" cy="360.1" r="8.5" fill="#4a80d8"/><circle cx="1194.1" cy="360.1" r="7.9" fill="url(#dp)"/><circle cx="1199.3" cy="357.1" r="5.7" fill="#8a1a24"/><circle cx="1199.3" cy="357.1" r="5.1" fill="url(#dp)"/><circle cx="1199.9" cy="377.0" r="7.0" fill="#48a830"/><circle cx="1208.0" cy="390.0" r="4.5" fill="#888888"/><circle cx="1210.3" cy="382.0" r="5.2" fill="#6a48b0"/><circle cx="1210.3" cy="382.0" r="4.6" fill="url(#dp)"/><circle cx="1198.1" cy="391.4" r="5.2" fill="#2a5a48"/><circle cx="1199.9" cy="385.0" r="4.2" fill="#e8b888"/><circle cx="1197.6" cy="396.4" r="4.8" fill="#3a80b8"/><circle cx="1203.7" cy="396.1" r="3.5" fill="#48a830"/><circle cx="1201.5" cy="406.8" r="6.0" fill="#68a8c0"/><circle cx="1206.2" cy="404.5" r="5.5" fill="#101418"/><circle cx="1134.7" cy="392.4" r="6.5" fill="#70f060"/><circle cx="1144.3" cy="393.4" r="6.0" fill="#68b858"/><circle cx="1144.3" cy="393.4" r="5.4" fill="url(#dp)"/><circle cx="1150.8" cy="392.7" r="3.5" fill="#a06890"/><circle cx="1153.8" cy="391.9" r="4.0" fill="#b89830"/><circle cx="1153.8" cy="391.9" r="3.4" fill="url(#dp)"/><circle cx="1163.7" cy="394.1" r="3.8" fill="#4a1868"/><circle cx="1163.7" cy="394.1" r="3.2" fill="url(#dp)"/><circle cx="1174.7" cy="398.9" r="6.0" fill="#a0f0d0"/><circle cx="1176.2" cy="396.4" r="5.5" fill="#3858a0"/><circle cx="1173.2" cy="394.9" r="6.0" fill="#4aa088"/><circle cx="1173.2" cy="394.9" r="5.4" fill="url(#dp)"/><circle cx="1141.8" cy="401.9" r="6.0" fill="#d8a878"/><circle cx="1148.8" cy="406.8" r="5.8" fill="#68b858"/><circle cx="1148.8" cy="406.8" r="5.2" fill="url(#dp)"/><circle cx="1152.8" cy="401.9" r="4.8" fill="#88d878"/><circle cx="1158.8" cy="408.3" r="7.0" fill="#a060e8"/><circle cx="1158.8" cy="408.3" r="6.4" fill="url(#dp)"/><circle cx="1165.7" cy="410.3" r="6.0" fill="#8040e0"/><circle cx="1165.7" cy="410.3" r="5.4" fill="url(#dp)"/><circle cx="1176.2" cy="413.8" r="6.0" fill="#90f080"/><circle cx="1178.7" cy="411.3" r="6.5" fill="#c080e0"/><circle cx="1178.7" cy="411.3" r="5.9" fill="url(#dp)"/><circle cx="1181.6" cy="404.9" r="6.0" fill="#4a80d8"/><circle cx="1181.6" cy="404.9" r="5.4" fill="url(#dp)"/><circle cx="1192.6" cy="411.6" r="3.5" fill="#90e0c0"/><circle cx="1192.6" cy="411.6" r="2.9" fill="url(#dp)"/><circle cx="1203.0" cy="415.8" r="4.0" fill="#90d070"/><circle cx="1203.0" cy="415.8" r="3.4" fill="url(#dp)"/><circle cx="1112.0" cy="409.8" r="4.0" fill="#a060e8"/><circle cx="1112.0" cy="409.8" r="3.4" fill="url(#dp)"/><circle cx="1111.0" cy="417.3" r="3.0" fill="#206040"/><circle cx="1134.9" cy="415.3" r="6.5" fill="#8a1838"/><circle cx="1136.4" cy="416.8" r="3.8" fill="#4a70a0"/><circle cx="1136.4" cy="416.8" r="3.2" fill="url(#dp)"/><circle cx="1144.8" cy="417.6" r="3.5" fill="#6a9050"/><circle cx="1144.8" cy="417.6" r="2.9" fill="url(#dp)"/><circle cx="1138.9" cy="420.3" r="4.0" fill="#a04878"/><circle cx="1127.9" cy="422.8" r="6.0" fill="#a0e890"/><circle cx="1127.9" cy="422.8" r="5.4" fill="url(#dp)"/><circle cx="1124.9" cy="429.2" r="5.5" fill="#e84050"/><circle cx="1119.5" cy="431.7" r="5.0" fill="#1c28d0"/><circle cx="1119.5" cy="431.7" r="4.4" fill="url(#dp)"/><circle cx="1111.0" cy="429.2" r="4.0" fill="#c0c0c0"/><circle cx="1139.9" cy="429.7" r="5.5" fill="#888888"/><circle cx="1134.4" cy="433.2" r="5.5" fill="#60c030"/><circle cx="1134.9" cy="428.2" r="3.8" fill="#7a4a28"/><circle cx="1149.1" cy="426.7" r="5.2" fill="#48a830"/><circle cx="1158.3" cy="422.6" r="4.8" fill="#5050e8"/><circle cx="1168.7" cy="421.3" r="6.5" fill="#a05840"/><circle cx="1168.7" cy="421.3" r="5.9" fill="url(#dp)"/><circle cx="1179.7" cy="425.7" r="7.5" fill="#a8d050"/><circle cx="1183.3" cy="422.6" r="4.5" fill="#f07070"/><circle cx="1183.3" cy="422.6" r="3.9" fill="url(#dp)"/><circle cx="1189.6" cy="416.8" r="4.0" fill="#d040b0"/><circle cx="1189.6" cy="420.3" r="4.5" fill="#7a4a28"/><circle cx="1189.6" cy="420.3" r="3.9" fill="url(#dp)"/><circle cx="1204.5" cy="423.8" r="4.5" fill="#e05030"/><circle cx="1197.6" cy="420.8" r="5.0" fill="#c06848"/><circle cx="1203.0" cy="426.5" r="5.5" fill="#90b8f0"/><circle cx="1203.0" cy="426.5" r="4.9" fill="url(#dp)"/><circle cx="1195.1" cy="429.7" r="4.0" fill="#50c8b0"/><circle cx="1195.1" cy="429.7" r="3.4" fill="url(#dp)"/><circle cx="1110.5" cy="438.7" r="3.0" fill="#c030c0"/><circle cx="1114.0" cy="440.7" r="4.5" fill="#60f040"/><circle cx="1124.0" cy="444.2" r="4.4" fill="#a0f0d0"/><circle cx="1129.9" cy="438.7" r="4.2" fill="#282828"/><circle cx="1121.9" cy="439.2" r="4.0" fill="#a08868"/><circle cx="1127.7" cy="441.5" r="3.8" fill="#c0d840"/><circle cx="1142.6" cy="438.7" r="4.2" fill="#e85060"/><circle cx="1142.6" cy="438.7" r="3.6" fill="url(#dp)"/><circle cx="1145.8" cy="446.6" r="5.0" fill="#a0f0c0"/><circle cx="1136.4" cy="445.1" r="5.0" fill="#58a868"/><circle cx="1136.4" cy="445.1" r="4.4" fill="url(#dp)"/><circle cx="1143.8" cy="445.1" r="4.5" fill="#608840"/><circle cx="1143.8" cy="445.1" r="3.9" fill="url(#dp)"/><circle cx="1156.8" cy="440.7" r="7.0" fill="#b070b0"/><circle cx="1163.7" cy="440.2" r="7.0" fill="#2048c0"/><circle cx="1179.2" cy="438.7" r="6.8" fill="#7030e0"/><circle cx="1179.2" cy="438.7" r="6.2" fill="url(#dp)"/><circle cx="1172.7" cy="438.7" r="6.0" fill="#90e0a0"/><circle cx="1172.7" cy="438.7" r="5.4" fill="url(#dp)"/><circle cx="1185.1" cy="435.7" r="4.5" fill="#98e890"/><circle cx="1195.4" cy="446.1" r="8.5" fill="#7a92d6"/><circle cx="1197.1" cy="435.7" r="8.0" fill="#989898"/><circle cx="1190.1" cy="443.2" r="4.2" fill="#7a1820"/><circle cx="1190.1" cy="443.2" r="3.6" fill="url(#dp)"/><circle cx="1111.5" cy="449.6" r="4.0" fill="#7080a0"/><circle cx="1111.5" cy="449.6" r="3.4" fill="url(#dp)"/><circle cx="1147.8" cy="454.6" r="7.0" fill="#4aa870"/><circle cx="1144.3" cy="460.1" r="7.5" fill="#4a88b8"/><circle cx="1152.7" cy="464.5" r="4.5" fill="#a08868"/><circle cx="1152.7" cy="464.5" r="3.9" fill="url(#dp)"/><circle cx="1168.9" cy="465.1" r="8.7" fill="#88c880"/><circle cx="1168.9" cy="465.1" r="8.1" fill="url(#dp)"/><circle cx="1164.8" cy="457.9" r="5.9" fill="#1c1ca0"/><circle cx="1186.1" cy="466.7" r="3.8" fill="#8a2820"/><circle cx="1186.1" cy="466.7" r="3.2" fill="url(#dp)"/><circle cx="1191.2" cy="474.0" r="5.2" fill="#e07830"/><circle cx="1202.1" cy="464.5" r="6.1" fill="#4830e0"/><circle cx="1153.6" cy="475.5" r="7.3" fill="#6888c0"/><circle cx="1153.6" cy="475.5" r="6.7" fill="url(#dp)"/><circle cx="1171.3" cy="484.2" r="7.0" fill="#72603c"/><circle cx="1171.3" cy="484.2" r="6.4" fill="url(#dp)"/><circle cx="1159.0" cy="488.1" r="4.0" fill="#6888c0"/><circle cx="1148.2" cy="493.0" r="6.2" fill="#60d0b8"/><circle cx="1148.2" cy="493.0" r="5.6" fill="url(#dp)"/><circle cx="1159.0" cy="502.9" r="6.8" fill="#7860c8"/><circle cx="1191.1" cy="494.8" r="7.8" fill="#70e8c8"/><circle cx="1191.1" cy="494.8" r="7.2" fill="url(#dp)"/><circle cx="1187.6" cy="503.5" r="4.6" fill="#2a6e62"/><circle cx="1187.6" cy="503.5" r="4.0" fill="url(#dp)"/><circle cx="1175.1" cy="515.7" r="4.8" fill="#0c1068"/><circle cx="1175.1" cy="515.7" r="4.2" fill="url(#dp)"/><circle cx="1174.7" cy="524.8" r="3.0" fill="#0c1088"/><circle cx="1143.9" cy="506.9" r="6.4" fill="#60e040"/><circle cx="1134.7" cy="504.5" r="6.8" fill="#90f050"/><circle cx="1143.9" cy="512.1" r="6.8" fill="#1c18d8"/><circle cx="1143.9" cy="512.1" r="6.2" fill="url(#dp)"/><circle cx="1116.0" cy="468.5" r="5.0" fill="#b0e050"/><circle cx="1275.0" cy="323.5" r="8.4" fill="#96593f"/><circle cx="1350.0" cy="327.2" r="8.5" fill="#b9536e"/><circle cx="1350.0" cy="327.2" r="7.9" fill="url(#dp)"/><circle cx="1281.3" cy="341.7" r="5.6" fill="#e48fc2"/><circle cx="1281.3" cy="341.7" r="5.0" fill="url(#dp)"/><circle cx="1293.2" cy="352.0" r="6.1" fill="#14171a"/><circle cx="1216.3" cy="357.6" r="6.6" fill="#6de83a"/><circle cx="1215.0" cy="362.9" r="3.5" fill="#4a3d22" stroke="#8a1c2c" stroke-width="1"/><circle cx="1224.5" cy="357.2" r="6.4" fill="#939393"/><circle cx="1234.4" cy="358.0" r="8.6" fill="#1a7a14"/><circle cx="1236.2" cy="355.9" r="6.0" fill="#9a9a9a"/><circle cx="1236.2" cy="355.9" r="5.4" fill="url(#dp)"/><circle cx="1245.5" cy="359.6" r="5.7" fill="#8a1c2c"/><circle cx="1254.7" cy="380.8" r="5.0" fill="#a6d94e"/><circle cx="1256.5" cy="373.1" r="5.6" fill="#66448c"/><circle cx="1250.4" cy="378.4" r="5.6" fill="#5f9ee8"/><circle cx="1250.4" cy="378.4" r="5.0" fill="url(#dp)"/><circle cx="1270.4" cy="377.5" r="8.5" fill="#5c1a7a"/><circle cx="1283.6" cy="372.2" r="5.6" fill="#7de8d0"/><circle cx="1305.5" cy="378.8" r="8.6" fill="#8f2191"/><circle cx="1293.6" cy="389.4" r="6.4" fill="#cfe05a"/><circle cx="1293.6" cy="389.4" r="5.8" fill="url(#dp)"/><circle cx="1298.6" cy="395.1" r="4.2" fill="#b23a94"/><circle cx="1311.8" cy="391.1" r="4.9" fill="#4a84b5"/><circle cx="1311.8" cy="391.1" r="4.3" fill="url(#dp)"/><circle cx="1344.3" cy="402.7" r="8.2" fill="#a8e660"/><circle cx="1224.0" cy="382.4" r="7.0" fill="#7a92d6"/><circle cx="1236.3" cy="384.8" r="6.1" fill="#66d63c"/><circle cx="1236.3" cy="384.8" r="5.5" fill="url(#dp)"/><circle cx="1251.0" cy="392.5" r="6.9" fill="#3f3a1f"/><circle cx="1258.7" cy="397.8" r="6.0" fill="#5e5e5e"/><circle cx="1258.7" cy="397.8" r="5.4" fill="url(#dp)"/><circle cx="1226.9" cy="399.0" r="8.2" fill="#47a628"/><circle cx="1236.2" cy="402.7" r="6.9" fill="#a8a8a8"/><circle cx="1242.1" cy="404.9" r="5.6" fill="#5fd6b4"/><circle cx="1242.1" cy="404.9" r="5.0" fill="url(#dp)"/><circle cx="1216.9" cy="416.6" r="8.0" fill="#8030e0"/><circle cx="1223.6" cy="416.6" r="6.6" fill="#8f8650"/><circle cx="1211.6" cy="415.3" r="6.6" fill="#f2cf45"/><circle cx="1228.6" cy="410.6" r="6.6" fill="#8a52b0"/><circle cx="1239.7" cy="421.0" r="7.7" fill="#5878c8"/><circle cx="1248.8" cy="420.3" r="5.6" fill="#f0924a"/><circle cx="1263.4" cy="412.6" r="7.3" fill="#2a6e62"/><circle cx="1268.7" cy="415.3" r="5.3" fill="#ebb888"/><circle cx="1264.4" cy="412.4" r="4.6" fill="#e84cc8"/><circle cx="1268.0" cy="406.0" r="4.6" fill="#c080e0"/><circle cx="1276.9" cy="404.7" r="4.9" fill="#62d4b6"/><circle cx="1280.6" cy="424.1" r="6.4" fill="#72c0b0"/><circle cx="1280.6" cy="424.1" r="5.8" fill="url(#dp)"/><circle cx="1297.8" cy="421.0" r="7.0" fill="#e08a9c"/><circle cx="1297.8" cy="421.0" r="6.4" fill="url(#dp)"/><circle cx="1322.8" cy="418.2" r="4.2" fill="#8f2191"/><circle cx="1264.8" cy="430.9" r="4.0" fill="#454a48"/><circle cx="1293.6" cy="440.7" r="6.0" fill="#60d838"/><circle cx="1293.6" cy="440.7" r="5.4" fill="url(#dp)"/><circle cx="1373.4" cy="447.5" r="8.6" fill="#7438e0"/><circle cx="1373.4" cy="447.5" r="8.0" fill="url(#dp)"/><circle cx="1253.0" cy="446.3" r="8.2" fill="#9890d2"/><circle cx="1235.5" cy="451.7" r="5.6" fill="#2d5a28"/><circle cx="1237.9" cy="452.8" r="4.6" fill="#a04a38"/><circle cx="1237.9" cy="452.8" r="4.0" fill="url(#dp)"/><circle cx="1220.6" cy="447.1" r="7.7" fill="#7fe8d0"/><circle cx="1225.2" cy="443.8" r="7.3" fill="#7ee694"/><circle cx="1210.6" cy="451.1" r="6.9" fill="#b0607e"/><circle cx="1210.6" cy="451.1" r="6.3" fill="url(#dp)"/><circle cx="1213.8" cy="488.2" r="6.8" fill="#8a52b0"/><circle cx="1213.8" cy="488.2" r="6.2" fill="url(#dp)"/><circle cx="1225.3" cy="485.0" r="5.5" fill="#9060c0"/><circle cx="1225.3" cy="485.0" r="4.9" fill="url(#dp)"/><circle cx="1212.6" cy="497.8" r="8.0" fill="#8a3858"/><circle cx="1216.7" cy="490.9" r="5.1" fill="#b0465e"/><circle cx="1240.5" cy="501.4" r="6.5" fill="#a0d880"/><circle cx="1240.5" cy="501.4" r="5.9" fill="url(#dp)"/><circle cx="1305.5" cy="508.4" r="4.9" fill="#7a30d8"/><circle cx="1305.5" cy="508.4" r="4.3" fill="url(#dp)"/><circle cx="1233.9" cy="429.5" r="5.4" fill="#6aa0c0"/><circle cx="1219.5" cy="433.0" r="6.0" fill="#a0d850"/><circle cx="1219.5" cy="433.0" r="5.4" fill="url(#dp)"/><circle cx="1223.7" cy="426.6" r="6.0" fill="#68c050"/><circle cx="1230.5" cy="430.2" r="3.4" fill="#90e870"/><circle cx="1215.8" cy="432.6" r="4.5" fill="#98a8e0"/></g></svg>
</div>
<div class="card" style="left:361px;top:625px;width:1069px;height:388px">
<div class="ct" style="left:16.500px;top:20px">リスクインデックス別財務影響額一覧</div>
<div class="cs" style="left:18px;top:40.800px">（金額の単位：百万円）</div>
<div class="gh" style="left:376px;width:336px">売上</div><div class="gh" style="left:712px;width:336px">資産</div>
<div class="abs" style="left:376px;top:97.500px;width:335px;height:1.300px;background:#777"></div><div class="abs" style="left:712px;top:97.500px;width:335px;height:1.300px;background:#777"></div>
<table class="tb"><colgroup><col style="width:186px"><col style="width:168px"><col style="width:168px"><col style="width:168px"><col style="width:168px"><col style="width:167px"></colgroup><tr class="h"><th>リスクインデックス</th><th>拠点数</th><th>財務影響額</th><th>単年財務影響額</th><th>財務影響額</th><th>単年財務影響額</th></tr><tr class="a"><td>-</td><td>1639</td><td>0</td><td>0</td><td>0</td><td>0</td></tr><tr class="b"><td>A</td><td>105</td><td>250,181</td><td>2,502</td><td>3,186,061</td><td>31,861</td></tr><tr class="a"><td>B</td><td>56</td><td>216,690</td><td>2,167</td><td>2,623,518</td><td>26,236</td></tr><tr class="b"><td>C</td><td>91</td><td>561,096</td><td>5,612</td><td>7,264,266</td><td>72,648</td></tr><tr class="a"><td>D</td><td>67</td><td>733,096</td><td>7,333</td><td>6,745,523</td><td>67,451</td></tr><tr class="b"><td>E</td><td>135</td><td>2,579,379</td><td>25,804</td><td>19,200,108</td><td>192,012</td></tr><tr class="a"><td><span class="j">合計</span></td><td>2,093</td><td>4,340,442</td><td>43,418</td><td>39,019,476</td><td>390,208</td></tr></table>
</div>
<div class="cbl"></div><div class="cbr"></div>
</body>
</html>
